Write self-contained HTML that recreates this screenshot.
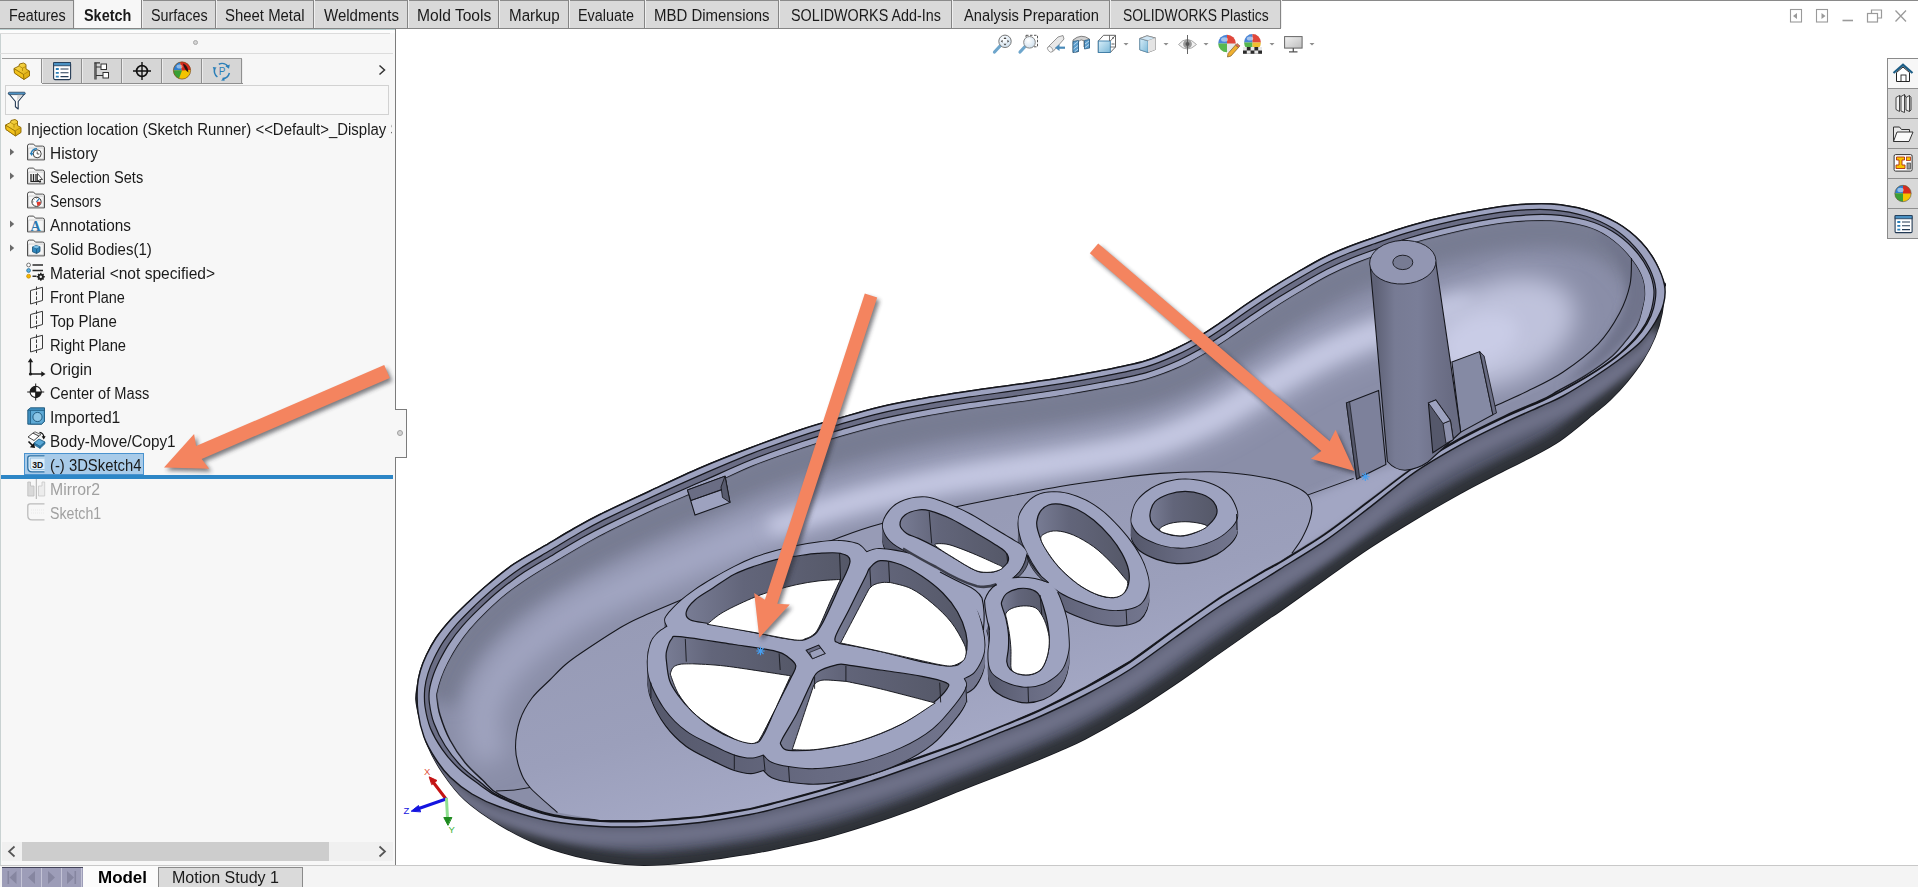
<!DOCTYPE html>
<html><head><meta charset="utf-8"><title>SOLIDWORKS - Injection location (Sketch Runner)</title>
<style>
html,body{margin:0;padding:0;background:#fff;}
body{width:1918px;height:887px;overflow:hidden;font-family:"Liberation Sans",sans-serif;}
#app{position:relative;width:1918px;height:887px;overflow:hidden;background:#fff;}
.t{position:absolute;white-space:nowrap;transform-origin:0 50%;line-height:20px;display:inline-block;}
.a{position:absolute;}
</style></head><body><div id="app">

<!-- left panel -->
<div class="a" style="left:0;top:30px;width:395px;height:836px;background:#f7f7f7"></div>
<div class="a" style="left:0;top:30px;width:1px;height:857px;background:#c9d2d2"></div>
<!-- top tab strip -->
<div class="a" style="left:0;top:0;width:1918px;height:1px;background:#8a8a8a"></div>
<div class="a" style="left:0;top:1px;width:1280px;height:27px;background:#d9d9d9"></div>
<div class="a" style="left:74px;top:0;width:67px;height:28px;background:#f7f7f7"></div>
<div class="a" style="left:0;top:28px;width:1281px;height:1px;background:#858585"></div>
<div class="a" style="left:0;top:29px;width:396px;height:1px;background:#b9cfd0"></div>
<div class="a" style="left:0;top:30px;width:395px;height:3px;background:#fcfcfc"></div>
<div class="a" style="left:0;top:33px;width:390px;height:1px;background:#dcdcdc"></div>
<div class="a" style="left:0;top:53px;width:393px;height:1px;background:#dcdcdc"></div>
<!-- tab separators -->
<div class="a sep" style="left:73px"></div><div class="a sep" style="left:141px"></div><div class="a sep" style="left:215px"></div>
<div class="a sep" style="left:313px"></div><div class="a sep" style="left:407px"></div><div class="a sep" style="left:498px"></div>
<div class="a sep" style="left:568px"></div><div class="a sep" style="left:644px"></div><div class="a sep" style="left:778px"></div>
<div class="a sep" style="left:951px"></div><div class="a sep" style="left:1109px"></div><div class="a sep" style="left:1280px"></div>
<style>.sep{top:0;width:1px;height:28px;background:#858585;box-shadow:1px 0 0 #efefef}</style>
<!-- small grip circle -->
<div class="a" style="left:193px;top:40px;width:5px;height:5px;border-radius:50%;background:#d4d4d4;border:1px solid #a8a8a8;box-sizing:border-box"></div>
<!-- icon tab strip -->
<div class="a" style="left:2px;top:58px;width:240px;height:1px;background:#9a9a9a"></div>
<div class="a" style="left:42px;top:59px;width:200px;height:24px;background:#d6d6d6"></div>
<div class="a" style="left:42px;top:83px;width:201px;height:1px;background:#8f8f8f"></div>
<div class="a isep" style="left:41px"></div><div class="a isep" style="left:81px"></div><div class="a isep" style="left:121px"></div>
<div class="a isep" style="left:161px"></div><div class="a isep" style="left:201px"></div><div class="a isep" style="left:241px"></div>
<style>.isep{top:59px;width:1px;height:24px;background:#8f8f8f;box-shadow:1px 0 0 #ececec}</style>
<!-- filter box -->
<div class="a" style="left:5px;top:85px;width:384px;height:30px;border:1px solid #d2d2d2;box-sizing:border-box;background:#f8f8f8"></div>
<!-- selection + rollback bar -->
<div class="a" style="left:24px;top:453px;width:120px;height:22px;background:#a8cbe9;border:1px solid #4a93cf;box-sizing:border-box"></div>
<div class="a" style="left:1px;top:475px;width:392px;height:4px;background:#2d86c6"></div>
<!-- panel right border + splitter handle -->
<div class="a" style="left:395px;top:29px;width:1px;height:837px;background:#7c7c7c"></div>
<div class="a" style="left:396px;top:409px;width:11px;height:49px;background:#f7f7f7;border:1px solid #7c7c7c;border-left:none;box-sizing:border-box"></div>
<div class="a" style="left:395px;top:410px;width:1px;height:47px;background:#f7f7f7"></div>
<div class="a" style="left:397px;top:430px;width:6px;height:6px;border-radius:50%;background:#d4d4d4;border:1px solid #a0a0a0;box-sizing:border-box"></div>
<!-- horizontal scrollbar -->
<div class="a" style="left:2px;top:842px;width:391px;height:19px;background:#f0f0f0"></div>
<div class="a" style="left:22px;top:842px;width:307px;height:19px;background:#cdcdcd"></div>
<!-- bottom strip -->
<div class="a" style="left:0;top:865px;width:1918px;height:1px;background:#c8c8c8"></div>
<div class="a" style="left:0;top:866px;width:1918px;height:21px;background:#f4f4f4"></div>
<div class="a" style="left:2px;top:867px;width:81px;height:20px;background:#9d9db8;border-top:1px solid #44445a;box-sizing:border-box"></div>
<div class="a" style="left:21px;top:868px;width:1px;height:19px;background:#c4c4d6"></div>
<div class="a" style="left:41px;top:868px;width:1px;height:19px;background:#c4c4d6"></div>
<div class="a" style="left:61px;top:868px;width:1px;height:19px;background:#c4c4d6"></div>
<div class="a" style="left:81px;top:868px;width:1px;height:19px;background:#c4c4d6"></div>
<div class="a" style="left:83px;top:866px;width:75px;height:21px;background:#fbfbfb"></div>
<div class="a" style="left:158px;top:867px;width:145px;height:20px;background:#dadada;border:1px solid #8a8a8a;border-bottom:none;box-sizing:border-box"></div>
<!-- right task pane -->
<div class="a" style="left:1887px;top:58px;width:31px;height:181px;background:#d8d8d8;border:1px solid #8a8a8a;border-right:none;box-sizing:border-box"></div>
<div class="a" style="left:1888px;top:59px;width:30px;height:29px;background:#f7f7f7"></div>
<div class="a" style="left:1888px;top:88px;width:30px;height:1px;background:#8f8f8f"></div>
<div class="a" style="left:1888px;top:118px;width:30px;height:1px;background:#8f8f8f"></div>
<div class="a" style="left:1888px;top:148px;width:30px;height:1px;background:#8f8f8f"></div>
<div class="a" style="left:1888px;top:178px;width:30px;height:1px;background:#8f8f8f"></div>
<div class="a" style="left:1888px;top:208px;width:30px;height:1px;background:#8f8f8f"></div>

<span class="t " style="left:9.2px;top:6.0px;font-size:16px;color:#1a1a1a;transform:scaleX(0.8965);">Features</span>
<span class="t " style="left:84.2px;top:6.0px;font-size:16px;color:#1a1a1a;transform:scaleX(0.9016);font-weight:bold;">Sketch</span>
<span class="t " style="left:150.9px;top:6.0px;font-size:16px;color:#1a1a1a;transform:scaleX(0.8965);">Surfaces</span>
<span class="t " style="left:225.2px;top:6.0px;font-size:16px;color:#1a1a1a;transform:scaleX(0.9323);">Sheet Metal</span>
<span class="t " style="left:324.2px;top:6.0px;font-size:16px;color:#1a1a1a;transform:scaleX(0.9394);">Weldments</span>
<span class="t " style="left:416.5px;top:6.0px;font-size:16px;color:#1a1a1a;transform:scaleX(0.9753);">Mold Tools</span>
<span class="t " style="left:509.2px;top:6.0px;font-size:16px;color:#1a1a1a;transform:scaleX(0.9485);">Markup</span>
<span class="t " style="left:578.2px;top:6.0px;font-size:16px;color:#1a1a1a;transform:scaleX(0.8978);">Evaluate</span>
<span class="t " style="left:654.2px;top:6.0px;font-size:16px;color:#1a1a1a;transform:scaleX(0.9354);">MBD Dimensions</span>
<span class="t " style="left:790.9px;top:6.0px;font-size:16px;color:#1a1a1a;transform:scaleX(0.8967);">SOLIDWORKS Add-Ins</span>
<span class="t " style="left:964.2px;top:6.0px;font-size:16px;color:#1a1a1a;transform:scaleX(0.9193);">Analysis Preparation</span>
<span class="t " style="left:1122.5px;top:6.0px;font-size:16px;color:#1a1a1a;transform:scaleX(0.8665);">SOLIDWORKS Plastics</span>
<span class="t " style="left:49.6px;top:144.0px;font-size:16px;color:#1a1a1a;transform:scaleX(0.9642);">History</span>
<span class="t " style="left:49.6px;top:168.0px;font-size:16px;color:#1a1a1a;transform:scaleX(0.9112);">Selection Sets</span>
<span class="t " style="left:49.6px;top:192.0px;font-size:16px;color:#1a1a1a;transform:scaleX(0.8723);">Sensors</span>
<span class="t " style="left:49.6px;top:216.0px;font-size:16px;color:#1a1a1a;transform:scaleX(0.9586);">Annotations</span>
<span class="t " style="left:49.6px;top:240.0px;font-size:16px;color:#1a1a1a;transform:scaleX(0.9383);">Solid Bodies(1)</span>
<span class="t " style="left:49.6px;top:264.0px;font-size:16px;color:#1a1a1a;transform:scaleX(0.9719);">Material &lt;not specified&gt;</span>
<span class="t " style="left:49.6px;top:288.0px;font-size:16px;color:#1a1a1a;transform:scaleX(0.9044);">Front Plane</span>
<span class="t " style="left:49.6px;top:312.0px;font-size:16px;color:#1a1a1a;transform:scaleX(0.9387);">Top Plane</span>
<span class="t " style="left:49.6px;top:336.0px;font-size:16px;color:#1a1a1a;transform:scaleX(0.9188);">Right Plane</span>
<span class="t " style="left:49.6px;top:360.0px;font-size:16px;color:#1a1a1a;transform:scaleX(0.9841);">Origin</span>
<span class="t " style="left:49.6px;top:384.0px;font-size:16px;color:#1a1a1a;transform:scaleX(0.9154);">Center of Mass</span>
<span class="t " style="left:49.6px;top:408.0px;font-size:16px;color:#1a1a1a;transform:scaleX(0.9759);">Imported1</span>
<span class="t " style="left:49.6px;top:432.0px;font-size:16px;color:#1a1a1a;transform:scaleX(0.9543);">Body-Move/Copy1</span>
<span class="t " style="left:49.6px;top:456.0px;font-size:16px;color:#1a1a1a;transform:scaleX(0.9261);">(-) 3DSketch4</span>
<span class="t " style="left:49.6px;top:480.0px;font-size:16px;color:#a0a0a0;transform:scaleX(0.9870);">Mirror2</span>
<span class="t " style="left:49.6px;top:504.0px;font-size:16px;color:#a0a0a0;transform:scaleX(0.8857);">Sketch1</span>
<div style="position:absolute;left:26.8px;top:120px;width:365.2px;height:22px;overflow:hidden"><span class="t" style="left:0;top:0;font-size:16px;color:#1a1a1a;transform:scaleX(0.9339)">Injection location (Sketch Runner) &lt;&lt;Default&gt;_Display State 1&gt;</span></div>
<span class="t " style="left:98.0px;top:868.0px;font-size:16px;color:#000;transform:scaleX(1.0603);font-weight:bold;">Model</span>
<span class="t " style="left:172.0px;top:868.0px;font-size:16px;color:#1a1a1a;transform:scaleX(1.0026);">Motion Study 1</span>
<svg class="a" style="left:0;top:0" width="1918" height="887" viewBox="0 0 1918 887">
<defs>
<linearGradient id="fg" x1="0" y1="0" x2="0" y2="1"><stop offset="0" stop-color="#fbfbfb"/><stop offset="1" stop-color="#cfcfcf"/></linearGradient>
<linearGradient id="yb" x1="0" y1="0" x2="1" y2="1"><stop offset="0" stop-color="#ffe45c"/><stop offset="1" stop-color="#d9a300"/></linearGradient>
<linearGradient id="bl" x1="0" y1="0" x2="1" y2="1"><stop offset="0" stop-color="#8fc7e8"/><stop offset="1" stop-color="#2f7fb0"/></linearGradient>
<linearGradient id="lb" x1="0" y1="0" x2="1" y2="1"><stop offset="0" stop-color="#d8eef9"/><stop offset="1" stop-color="#7db9d8"/></linearGradient>
<linearGradient id="mon" x1="0" y1="0" x2="1" y2="1"><stop offset="0" stop-color="#f2f2f2"/><stop offset="1" stop-color="#bdbdbd"/></linearGradient>
<radialGradient id="glass" cx="0.4" cy="0.35" r="0.7"><stop offset="0" stop-color="#ffffff"/><stop offset="1" stop-color="#cfe0ee"/></radialGradient>
<g id="folder"><path d="M0.5,2.5 Q0.5,0.6 2.4,0.6 L6.6,0.6 L8.4,2.6 L15.6,2.6 Q17.5,2.6 17.5,4.5 L17.5,16.4 L0.5,16.4Z" fill="url(#fg)" stroke="#4f4f4f" stroke-width="1"/><path d="M1.6,4.6 L16.4,4.6 L16.4,15.4 L1.6,15.4Z" fill="#f6f6f6" stroke="#bdbdbd" stroke-width="0.6"/></g>
<g id="part"><path d="M1,6 L6,3.5 L6.5,1.5 L10.5,0.5 L13,2 L13,6.5 L16.5,8.5 L16.5,13.5 L11,17 L1.5,10.5Z" fill="url(#yb)" stroke="#8a6400" stroke-width="0.9" stroke-linejoin="round"/><path d="M1.2,6.2 L10.5,12 L16.3,8.6 M10.5,12 L10.8,16.8 M6.2,3.6 L9.5,5.6 L13,4 M9.5,5.6 L9.5,8.5" fill="none" stroke="#a87c00" stroke-width="0.7"/><path d="M1.2,6.2 L10.5,12 L10.8,16.8 L1.5,10.5Z" fill="#f2c21c"/><path d="M1.2,6.2 L10.5,12 L10.8,16.8 L1.5,10.5Z" fill="none" stroke="#8a6400" stroke-width="0.7"/></g>
<g id="plane"><path d="M2.5,4 L14.5,0.8 L14.5,14 L2.5,17.5Z" fill="none" stroke="#3a3a3a" stroke-width="1"/><path d="M8.5,0 L8.5,19" stroke="#3a3a3a" stroke-width="1" stroke-dasharray="3.5,1.5"/></g>
<path id="tri" d="M0,-3.6 L4.2,0 L0,3.6Z" fill="#6a6a6a"/>
<path id="dd" d="M0,0 L5,0 L2.5,2.6Z" fill="#8c8c8c"/>
</defs>
<use href="#part" x="4.5" y="119"/>
<use href="#folder" x="27" y="143.5"/>
<use href="#folder" x="27" y="167.5"/>
<use href="#folder" x="27" y="191.5"/>
<use href="#folder" x="27" y="215.5"/>
<use href="#folder" x="27" y="239.5"/>
<use href="#tri" x="10" y="152"/>
<use href="#tri" x="10" y="176"/>
<use href="#tri" x="10" y="224"/>
<use href="#tri" x="10" y="248"/>
<g transform="translate(27,143.5)"><circle cx="10.2" cy="10.3" r="4" fill="#fff" stroke="#2c2c2c" stroke-width="0.9"/><path d="M10.2,8 L10.2,10.5 L12.3,10.5" fill="none" stroke="#2c2c2c" stroke-width="0.8"/><path d="M4.2,9.5 A6,6 0 0 1 10,5.2" fill="none" stroke="#2b7fb8" stroke-width="1.6"/><path d="M2.6,9.6 L6.6,9.6 L4.6,12.6Z" fill="#2b7fb8"/></g>
<g transform="translate(27,167.5)"><path d="M4,6.5 L4,14 M6.5,6.5 L6.5,14 M9,6.5 L9,14" stroke="#222" stroke-width="1.3"/><path d="M10.5,6 L15.5,12 L12.8,12 L13.8,14.5 L12.5,14.8 L11.5,12.5 L10.5,13.8Z" fill="#fff" stroke="#222" stroke-width="0.8"/><path d="M3.5,14 L14,14" stroke="#222" stroke-width="1"/></g>
<g transform="translate(27,191.5)"><circle cx="9.5" cy="10.3" r="4.6" fill="#fff" stroke="#333" stroke-width="1"/><path d="M9.5,10.3 L13.8,10.3 A4.3,4.3 0 0 1 10.5,14.5Z" fill="#e23a2e"/><path d="M9.5,10.3 L12.3,7" stroke="#2b7fb8" stroke-width="1.2"/><path d="M9.5,6 L9.5,7 M5.5,10.3 L6.5,10.3 M6.6,7.4 L7.3,8.1" stroke="#333" stroke-width="0.7"/></g>
<text x="30.4" y="230.5" font-family="Liberation Serif, serif" font-weight="bold" font-size="14" fill="#2a78b0">A</text>
<g transform="translate(27,239.5)"><path d="M5.5,7.5 L9,6 L13,7.2 L13,12 L9.6,14 L5.5,12.3Z" fill="#2f86bd" stroke="#174f73" stroke-width="0.8"/><path d="M5.5,7.5 L9.6,9 L13,7.2 M9.6,9 L9.6,14" fill="none" stroke="#174f73" stroke-width="0.7"/><path d="M5.5,7.5 L9,6 L13,7.2 L9.6,9Z" fill="#7cc0e6"/></g>
<g transform="translate(26,263)"><path d="M6.5,2 L17,2 M6.5,7.5 L17,7.5 M6.5,13.2 L10.5,13.2" stroke="#2a2a2a" stroke-width="1.6"/><circle cx="2.6" cy="2" r="1.9" fill="#fff" stroke="#555" stroke-width="0.8"/><circle cx="2.6" cy="7.5" r="1.9" fill="#59b0e0" stroke="#2a6d96" stroke-width="0.8"/><circle cx="2.6" cy="13.2" r="2" fill="#f7b500" stroke="#b98500" stroke-width="0.6"/><circle cx="14.8" cy="13.8" r="3.1" fill="#222"/><circle cx="14.8" cy="13.8" r="1.1" fill="#f4f4f4"/><path d="M14.8,9.8 L14.8,17.8 M10.8,13.8 L18.8,13.8 M12,11 L17.6,16.6 M17.6,11 L12,16.6" stroke="#222" stroke-width="1.4"/><circle cx="14.8" cy="13.8" r="1.2" fill="#f4f4f4"/></g>
<use href="#plane" x="28" y="286.5"/>
<use href="#plane" x="28" y="310.5"/>
<use href="#plane" x="28" y="334.5"/>
<g transform="translate(27,358)"><path d="M3.5,3 L3.5,16 L16,16" fill="none" stroke="#1c1c1c" stroke-width="1.5"/><path d="M3.5,0 L6.2,4.2 L0.8,4.2Z M18.5,16 L14.3,13.3 L14.3,18.7Z" fill="#1c1c1c"/><circle cx="3.5" cy="16" r="1.6" fill="#1c1c1c"/></g>
<g transform="translate(27,383)"><circle cx="8.7" cy="9" r="5.6" fill="#fff" stroke="#1c1c1c" stroke-width="1.1"/><path d="M8.7,9 L8.7,3.4 A5.6,5.6 0 0 0 3.1,9Z M8.7,9 L8.7,14.6 A5.6,5.6 0 0 0 14.3,9Z" fill="#1c1c1c"/><path d="M8.7,0.5 L8.7,17.5 M0.2,9 L17.2,9" stroke="#1c1c1c" stroke-width="1"/></g>
<g transform="translate(27,407)"><path d="M0.8,3 L3.5,0.8 L17.5,0.8 L17.5,14.5 L14.5,17.2 L0.8,17.2Z" fill="#3f8fc0" stroke="#1a5478" stroke-width="0.9"/><path d="M3.5,3.4 L17.3,3.4 L17.3,14.5 L14.5,17 L3.5,17Z" fill="#5eaad6" stroke="#1a5478" stroke-width="0.7"/><circle cx="10.5" cy="10" r="4.6" fill="#8cc6e6" stroke="#1a5478" stroke-width="0.9"/><path d="M0.8,3 L3.5,3.4" stroke="#1a5478" stroke-width="0.7"/></g>
<g transform="translate(27,431)"><path d="M1,6 L6,2 L12,5 L7,9.5Z" fill="#fff" stroke="#333" stroke-width="0.9"/><path d="M6,2 L8,0.8 L14,3.6 L12,5Z" fill="#eee" stroke="#333" stroke-width="0.7"/><path d="M7,12 L12,8 L18,11 L13,15.5Z" fill="#59a9d8" stroke="#1d5e86" stroke-width="0.9"/><path d="M7,12 L7,13.8 L13,17.4 L13,15.5Z M13,15.5 L18,11 L18,12.8 L13,17.4Z" fill="#2f7fb0" stroke="#1d5e86" stroke-width="0.6"/><path d="M1.5,10.5 L6.5,15.5" stroke="#111" stroke-width="1.6"/><path d="M8,17 L2.8,16.2 L7,12Z" fill="#111"/><path d="M12.5,1.5 A4.5,4.5 0 0 1 16.8,6" fill="none" stroke="#111" stroke-width="1.3"/><path d="M16.8,8.5 L14.6,5.2 L18.6,5.2Z" fill="#111"/></g>
<g transform="translate(27,455)"><path d="M17.5,0.8 L3,0.8 Q0.8,0.8 0.8,3 L0.8,12.5 Q0.8,16.8 5,16.8 L17.5,16.8" fill="#dfeefa" stroke="#2a6fa4" stroke-width="1.3"/><path d="M3.2,3 L17.5,3 M3.2,3 L3.2,12 Q3.2,14.6 6,14.6 L17.5,14.6" fill="none" stroke="#7eb3d9" stroke-width="0.8"/><text x="5.2" y="12.6" font-family="Liberation Sans, sans-serif" font-weight="bold" font-size="8.6" fill="#111">3D</text></g>
<g transform="translate(27,479)"><path d="M0.8,17 L0.8,3 L3.5,3 L3.5,7 L7,7 L7,17Z" fill="#d9d9d9" stroke="#bdbdbd" stroke-width="0.8"/><path d="M11.5,17 L11.5,7 L15,7 L15,3 L17.7,3 L17.7,17Z" fill="#ececec" stroke="#c8c8c8" stroke-width="0.8"/><path d="M9.3,0 L9.3,20" stroke="#a8a8a8" stroke-width="0.9"/></g>
<g transform="translate(27,503)"><path d="M17.5,0.8 L3,0.8 Q0.8,0.8 0.8,3 L0.8,12.5 Q0.8,16.8 5,16.8 L17.5,16.8" fill="none" stroke="#bcbcbc" stroke-width="1.3"/><path d="M4,7 L17,7 M4,10 L17,10" stroke="#e6e6e6" stroke-width="0.8" stroke-dasharray="1,1"/></g>
<g transform="translate(13,62.5) scale(1.0)"><use href="#part"/></g>
<g transform="translate(53,62)"><rect x="0.6" y="0.6" width="17" height="17" rx="1.5" fill="#fff" stroke="#243b55" stroke-width="1.1"/><rect x="0.6" y="0.6" width="17" height="3.2" fill="#4a90c2" stroke="#243b55" stroke-width="0.8"/><path d="M2.8,7 L5.8,7 M2.8,10.8 L5.8,10.8 M2.8,14.6 L5.8,14.6" stroke="#2b7fb8" stroke-width="1.8"/><path d="M7.5,7 L15.5,7 M7.5,10.8 L15.5,10.8 M7.5,14.6 L15.5,14.6" stroke="#243b55" stroke-width="1.1"/></g>
<g transform="translate(94,62)"><path d="M2,0.5 L2,17.5 M0.5,0.8 L6,0.8 M2,5 L7,5 M2,13.5 L9,13.5" fill="none" stroke="#333" stroke-width="1.2"/><path d="M0.8,0.5 L0.8,17.5" stroke="#333" stroke-width="0.9"/><rect x="7" y="2" width="5.5" height="5.5" fill="#fff" stroke="#333" stroke-width="1"/><rect x="9" y="10.5" width="5.5" height="5.5" fill="#fff" stroke="#333" stroke-width="1"/></g>
<g transform="translate(142,71)"><circle r="5.4" fill="none" stroke="#111" stroke-width="1.7"/><path d="M-9,0 L9,0 M0,-9 L0,9" stroke="#111" stroke-width="1.4"/></g>
<g transform="translate(182,70.5)"><circle r="8.6" fill="#f4c400"/><path d="M0,0 L-8.6,0 A8.6,8.6 0 0 1 -2,-8.4Z" fill="#2f7fd0"/><path d="M0,0 L-2,-8.4 A8.6,8.6 0 0 1 8.6,-0.5Z" fill="#d92b1e"/><path d="M0,0 L-8.6,0 A8.6,8.6 0 0 0 -3,8Z" fill="#3aa035"/><path d="M1,-7 Q6,-5 6.5,2 Q2,-1 1,-7Z" fill="#2a1410"/><circle r="8.6" fill="none" stroke="#7a4a20" stroke-width="0.7"/><ellipse cx="-2.5" cy="-4" rx="3" ry="2" fill="#fff" opacity="0.45"/></g>
<g transform="translate(222,71)"><path d="M-3.2,-6.8 A7.6,7.6 0 0 1 6.2,-4.2 M7.4,2 A7.6,7.6 0 0 1 0.5,7.6 M-4.6,6 A7.6,7.6 0 0 1 -7.2,-2.4" fill="none" stroke="#2b7fb8" stroke-width="1.5"/><path d="M7.8,-6.5 L7,-2.2 L3.4,-4.8Z M-1,9.6 L2.4,6.2 L2.6,9.8Z M-9.2,-4 L-5.4,-3.4 L-8,-0.4Z" fill="#2b7fb8"/><text x="-3.2" y="3.6" font-family="Liberation Sans, sans-serif" font-size="10" fill="#2b7fb8">P</text></g>
<path d="M379.5,65.5 L384.5,70 L379.5,74.5" fill="none" stroke="#333" stroke-width="1.5"/>
<g transform="translate(8,92)"><path d="M0.7,1.5 L16.8,1.5 L10.2,9.5 L10.2,17 L7.4,14.8 L7.4,9.5Z" fill="#fdfdfd" stroke="#243b55" stroke-width="1.1" stroke-linejoin="round"/><rect x="0.3" y="0.2" width="16.9" height="2.4" rx="1" fill="#4a90c2" stroke="#243b55" stroke-width="0.7"/><path d="M8.8,9 L14.5,2.8 L9.5,2.8Z" fill="#c8c8c8" opacity="0.7"/></g>
<path d="M14.5,846.5 L9,851.5 L14.5,856.5" fill="none" stroke="#555" stroke-width="1.7"/>
<path d="M379.5,846.5 L385,851.5 L379.5,856.5" fill="none" stroke="#555" stroke-width="1.7"/>
<g fill="#8686a0"><path d="M16.5,871 L9.5,877.5 L16.5,884Z"/><rect x="7.5" y="871" width="1.6" height="13"/><path d="M35,871 L28,877.5 L35,884Z"/><path d="M48,871 L55,877.5 L48,884Z"/><path d="M67,871 L74,877.5 L67,884Z"/><rect x="74.5" y="871" width="1.6" height="13"/></g>
<g fill="none" stroke="#9a9a9a" stroke-width="1.1"><rect x="1790.5" y="9.5" width="11" height="12.5"/><rect x="1816.5" y="9.5" width="11" height="12.5"/></g>
<path d="M1797,13 L1793,16 L1797,19Z M1821.5,13 L1825.5,16 L1821.5,19Z" fill="#9a9a9a"/>
<path d="M1842.5,20.5 L1853,20.5" stroke="#9a9a9a" stroke-width="1.6"/>
<g fill="none" stroke="#9a9a9a" stroke-width="1.2"><path d="M1871.5,13.5 L1871.5,10 L1881.5,10 L1881.5,18 L1877.5,18"/><rect x="1867.5" y="13.5" width="10" height="8.5"/></g>
<path d="M1895.5,10.5 L1906,21.5 M1906,10.5 L1895.5,21.5" stroke="#9a9a9a" stroke-width="1.3"/>
<g transform="translate(1893,64)"><path d="M0.5,9 L10,0.8 L19.5,9" fill="none" stroke="#1d5e86" stroke-width="2.2"/><path d="M3.5,8.5 L3.5,17.5 L16.5,17.5 L16.5,8.5 L10,3Z" fill="#fff" stroke="#222" stroke-width="1"/><rect x="8" y="11" width="5" height="6.5" fill="#fff" stroke="#222" stroke-width="0.9"/></g>
<g transform="translate(1894,93.5)"><path d="M2,4 L5.5,2 L5.5,18 L2,16Z M7,3 L10.5,1 L10.5,19 L7,17.5Z M12,4 L15.5,2 L15.5,18 L12,16.5Z" fill="#f2f2f2" stroke="#333" stroke-width="0.9"/><path d="M5.5,2 L7,3 M10.5,1 L12,4 M15.5,2 L17,4 L17,16.5 L15.5,18" fill="none" stroke="#333" stroke-width="0.9"/></g>
<g transform="translate(1892.5,125)"><path d="M1,16.5 L1,2 L7,2 L9,4.5 L17,4.5 L17,7" fill="#e9e9e9" stroke="#333" stroke-width="1"/><path d="M1,16.5 L4.5,7 L20.5,7 L16.5,16.5Z" fill="#fafafa" stroke="#333" stroke-width="1"/></g>
<g transform="translate(1893.5,154)"><rect x="0.6" y="0.6" width="18" height="16.5" rx="1.5" fill="#fff" stroke="#333" stroke-width="1"/><path d="M3,3 L11,3 L11,6 L8.5,6 L8.5,11 L11.5,11 L11.5,14.5 L2.5,14.5 L2.5,11 L5.5,11 L5.5,6 L3,6Z" fill="#f7c400" stroke="#b03010" stroke-width="0.9"/><rect x="13" y="3" width="4" height="3.5" fill="#f7c400" stroke="#b03010" stroke-width="0.8"/><rect x="13.5" y="9" width="3.5" height="6" fill="#9a9a9a" stroke="#444" stroke-width="0.7"/></g>
<g transform="translate(1903,193.5)"><circle r="8.2" fill="#f4c400"/><path d="M0,0 L-8.2,0 A8.2,8.2 0 0 1 0,-8.2Z" fill="#2f7fd0"/><path d="M0,0 L0,-8.2 A8.2,8.2 0 0 1 8.2,0Z" fill="#d92b1e"/><path d="M0,0 L-8.2,0 A8.2,8.2 0 0 0 0,8.2Z" fill="#3aa035"/><circle r="8.2" fill="none" stroke="#555" stroke-width="0.6"/><ellipse cx="-2.5" cy="-3.5" rx="3.2" ry="2.2" fill="#fff" opacity="0.5"/></g>
<g transform="translate(1894.5,215)"><rect x="0.6" y="0.6" width="17" height="17" rx="1.2" fill="#fff" stroke="#243b55" stroke-width="1.1"/><rect x="0.6" y="0.6" width="17" height="3.2" fill="#4a90c2" stroke="#243b55" stroke-width="0.8"/><path d="M2.8,7 L5.8,7 M2.8,10.8 L5.8,10.8 M2.8,14.6 L5.8,14.6" stroke="#2b7fb8" stroke-width="1.8"/><path d="M7.5,7 L15.5,7 M7.5,10.8 L15.5,10.8 M7.5,14.6 L15.5,14.6" stroke="#243b55" stroke-width="1.1"/></g>
<g transform="translate(993.5,34.5)"><path d="M1,17.5 L7.5,10.5" stroke="#6ea6cc" stroke-width="3.2" stroke-linecap="round"/><circle cx="11.5" cy="6.8" r="6.2" fill="url(#glass)" stroke="#777" stroke-width="1"/><path d="M11.5,2.6 L13,4.4 L10,4.4Z M11.5,11 L13,9.2 L10,9.2Z M7.3,6.8 L9.1,5.3 L9.1,8.3Z M15.7,6.8 L13.9,5.3 L13.9,8.3Z" fill="#444"/></g>
<g transform="translate(1019,34.5)"><rect x="7" y="0.8" width="11.5" height="11.5" fill="none" stroke="#444" stroke-width="0.9" stroke-dasharray="2.5,1.5"/><path d="M1,17.5 L7,11" stroke="#6ea6cc" stroke-width="3.2" stroke-linecap="round"/><circle cx="10.5" cy="7.8" r="5.8" fill="url(#glass)" stroke="#888" stroke-width="1"/></g>
<g transform="translate(1046,34.5)"><path d="M1.5,13 L12,2.5 L17,1 L18,4.5 L7,17 Q3,18 1.5,13Z" fill="#e8e8e8" stroke="#888" stroke-width="0.9"/><ellipse cx="4.2" cy="14.8" rx="2.2" ry="3.2" transform="rotate(-40 4.2 14.8)" fill="#fafafa" stroke="#888" stroke-width="0.7"/><path d="M19,13.2 L12.5,13.2" stroke="#4a8ab8" stroke-width="2.2"/><path d="M9,13.2 L13.5,9.8 L13.5,16.6Z" fill="#4a8ab8"/></g>
<g transform="translate(1072,35)"><path d="M1,5 Q9,-2 17.5,4 L17.5,13 Q13,9.5 12,12 L12,5.8 Q9,3.5 6.5,6.5 L6.5,16.5 L1,17.5Z" fill="#d0d0d0" stroke="#666" stroke-width="0.8"/><path d="M1,6.5 L6.5,5.5 L6.5,16.5 L1,17.5Z M12.5,5.5 L17.5,4.5 L17.5,13 L12.5,14Z" fill="#5a9ccc" stroke="#2c5f86" stroke-width="0.8"/><path d="M1.5,10 L6,6.5 M1.5,14 L6,10.5 M2.5,17 L6,14 M13,9 L17,6 M13,12.5 L17,9.5" stroke="#cfe6f5" stroke-width="0.8"/></g>
<g transform="translate(1097.5,34.5)"><path d="M0.8,6.5 L6,0.8 L18,0.8 L18,12.5 L12.8,18 L0.8,18Z" fill="#fff" stroke="#555" stroke-width="0.9"/><rect x="0.8" y="6.5" width="12" height="11.5" fill="url(#lb)" stroke="#3d7da8" stroke-width="0.9"/><path d="M12.8,6.5 L18,0.8 M12,0.8 L12,6.5 M12.8,12.5 L18,12.5" stroke="#555" stroke-width="0.8"/><path d="M14,9.5 L17,9.5 M14.5,3.5 L16.5,3.5" stroke="#333" stroke-width="0.8"/></g>
<use href="#dd" x="1123.5" y="43"/>
<g transform="translate(1139,35)"><path d="M0.8,3.5 L8,0.8 L16.5,3 L16.5,14.5 L9,17.5 L0.8,14.8Z" fill="#fff" stroke="#777" stroke-width="0.9"/><path d="M0.8,3.5 L9,5.8 L9,17.5 L0.8,14.8Z" fill="url(#lb)" stroke="#4a86ad" stroke-width="0.7"/><path d="M0.8,3.5 L8,0.8 L16.5,3 L9,5.8Z" fill="#cfe6f5" stroke="#777" stroke-width="0.6"/><path d="M9,5.8 L16.5,3 L16.5,14.5 L9,17.5Z" fill="#e4e4e4"/></g>
<use href="#dd" x="1163.5" y="43"/>
<g transform="translate(1178,36)"><path d="M0.5,8.5 Q9,-1.5 18.5,8.5 Q9,17.5 0.5,8.5Z" fill="#f2f2f2" stroke="#aaa" stroke-width="1"/><circle cx="9.5" cy="8" r="4.4" fill="#9a9a9a"/><circle cx="9.5" cy="8" r="2" fill="#555"/><path d="M9.5,-1 L9.5,18" stroke="#555" stroke-width="0.9"/></g>
<use href="#dd" x="1203.5" y="43"/>
<g transform="translate(1227,43.5)"><circle r="8.8" fill="#e8e8e8"/><path d="M0,0 L-8.8,0 A8.8,8.8 0 0 1 0,-8.8Z" fill="#4a86d8"/><path d="M0,0 L0,-8.8 A8.8,8.8 0 0 1 8.8,0Z" fill="#e0483c"/><path d="M0,0 L-8.8,0 A8.8,8.8 0 0 0 0,8.8Z" fill="#57b84e"/><ellipse cx="-2.5" cy="-4" rx="3.4" ry="2.2" fill="#fff" opacity="0.5"/><path d="M1,10 L8.5,1.5 L11.5,4 L4,12.5 L0.5,13.5Z" fill="#f0b030" stroke="#7a5a20" stroke-width="0.7"/><path d="M8.5,1.5 L10,0 L13,2.4 L11.5,4Z" fill="#e06a5a" stroke="#7a5a20" stroke-width="0.6"/></g>
<g transform="translate(1252.5,42.5)"><circle r="8.4" fill="#e8e8e8"/><path d="M0,0 L-8.4,0 A8.4,8.4 0 0 1 0,-8.4Z" fill="#4a86d8"/><path d="M0,0 L0,-8.4 A8.4,8.4 0 0 1 8.4,0Z" fill="#e0483c"/><path d="M0,0 L-8.4,0 A8.4,8.4 0 0 0 0,8.4Z" fill="#57b84e"/><path d="M0,0 L8.4,0 A8.4,8.4 0 0 1 0,8.4Z" fill="#f0c030"/><ellipse cx="-2.5" cy="-4" rx="3.2" ry="2" fill="#fff" opacity="0.5"/><rect x="-9.5" y="4.5" width="19" height="6.8" fill="#2a2a2a"/><path d="M-9.5,4.5 h3.8 v3.4 h-3.8Z M-1.9,4.5 h3.8 v3.4 h-3.8Z M5.7,4.5 h3.8 v3.4 h-3.8Z M-5.7,7.9 h3.8 v3.4 h-3.8Z M1.9,7.9 h3.8 v3.4 h-3.8Z" fill="#e8e8e8"/></g>
<use href="#dd" x="1269.5" y="43"/>
<g transform="translate(1284,36)"><rect x="0.6" y="0.6" width="17.5" height="11.5" fill="url(#mon)" stroke="#666" stroke-width="1"/><path d="M9.3,12 L9.3,15.5 M5,15.8 L13.5,15.8" stroke="#555" stroke-width="1.3"/></g>
<use href="#dd" x="1309.5" y="43"/>
</svg>
<svg class="a" style="left:0;top:0" width="1918" height="887" viewBox="0 0 1918 887">
<defs>
<linearGradient id="gOuter" gradientUnits="userSpaceOnUse" x1="900" y1="760" x2="925" y2="825"><stop offset="0" stop-color="#6a6d84"/><stop offset="0.35" stop-color="#595c70"/><stop offset="1" stop-color="#35363f"/></linearGradient>
<linearGradient id="gOuter2" gradientUnits="userSpaceOnUse" x1="0" y1="0" x2="1" y2="0" gradientTransform="translate(1400 470) rotate(58) scale(60)"><stop offset="0" stop-color="#6a6d84"/><stop offset="0.4" stop-color="#565a6d"/><stop offset="1" stop-color="#393a45"/></linearGradient>
<filter id="b4" x="-20%" y="-20%" width="140%" height="140%"><feGaussianBlur stdDeviation="4"/></filter>
<filter id="b8" x="-20%" y="-20%" width="140%" height="140%"><feGaussianBlur stdDeviation="8"/></filter>
<filter id="b12" x="-20%" y="-20%" width="140%" height="140%"><feGaussianBlur stdDeviation="12"/></filter>
<filter id="b2" x="-20%" y="-20%" width="140%" height="140%"><feGaussianBlur stdDeviation="2"/></filter>
<filter id="sh" x="-20%" y="-20%" width="150%" height="150%"><feGaussianBlur stdDeviation="2.2"/></filter>
<clipPath id="cB"><path d="M437.5,692.0C438.2,688.8 439.8,682.8 441.5,678.0C443.2,673.2 445.3,668.2 448.0,663.0C450.7,657.8 453.8,652.1 457.5,646.5C461.2,640.9 465.1,635.3 470.0,629.5C474.9,623.7 480.9,617.4 487.0,611.5C493.1,605.6 499.2,599.8 506.5,594.0C513.8,588.2 521.8,582.7 530.5,577.0C539.2,571.3 549.8,565.2 559.0,559.7C568.2,554.2 577.3,548.7 586.0,543.8C594.7,538.9 599.0,536.5 611.0,530.5C623.0,524.5 642.3,515.1 658.0,508.0C673.7,500.9 689.2,495.0 705.0,488.0C720.8,481.0 736.8,472.6 753.0,466.0C769.2,459.4 787.3,453.4 802.0,448.5C816.7,443.6 828.0,440.2 841.0,436.5C854.0,432.8 866.8,429.2 880.0,426.0C893.2,422.8 905.0,420.3 920.0,417.5C935.0,414.7 953.3,411.6 970.0,409.0C986.7,406.4 1005.0,404.2 1020.0,402.0C1035.0,399.8 1046.7,398.2 1060.0,396.0C1073.3,393.8 1085.7,391.8 1100.0,389.0C1114.3,386.2 1132.7,383.2 1146.0,379.5C1159.3,375.8 1169.8,371.5 1180.0,367.0C1190.2,362.5 1198.8,357.2 1207.0,352.5C1215.2,347.8 1220.8,343.9 1229.0,338.5C1237.2,333.1 1247.3,325.8 1256.0,320.0C1264.7,314.2 1272.8,308.7 1281.0,303.5C1289.2,298.3 1297.0,293.7 1305.0,289.0C1313.0,284.3 1321.0,279.6 1329.0,275.5C1337.0,271.4 1345.0,267.8 1353.0,264.5C1361.0,261.2 1367.7,258.8 1377.0,255.5C1386.3,252.2 1398.2,247.8 1409.0,244.5C1419.8,241.2 1430.2,238.4 1442.0,235.5C1453.8,232.6 1467.8,229.2 1480.0,227.0C1492.2,224.8 1503.2,223.0 1515.0,222.0C1526.8,221.0 1539.2,220.2 1551.0,221.0C1562.8,221.8 1576.5,224.0 1586.0,226.7C1595.5,229.4 1601.2,232.4 1608.0,237.0C1614.8,241.6 1621.5,247.7 1627.0,254.0C1632.5,260.3 1638.1,268.3 1641.0,275.0C1643.9,281.7 1644.5,287.7 1644.5,294.0C1644.5,300.3 1642.2,307.8 1641.0,313.0C1639.8,318.2 1639.0,321.1 1637.0,325.0C1635.0,328.9 1633.1,331.6 1629.0,336.7C1624.9,341.8 1619.6,349.4 1612.5,355.7C1605.4,362.0 1595.6,368.7 1586.5,374.6C1577.4,380.5 1565.5,386.8 1558.0,391.0C1550.5,395.2 1550.3,395.9 1541.5,400.0C1532.7,404.1 1518.6,409.4 1505.0,415.8C1491.4,422.2 1475.0,430.0 1460.0,438.3C1445.0,446.6 1430.0,455.2 1415.0,465.4C1400.0,475.5 1385.0,487.9 1370.0,499.2C1355.0,510.5 1340.0,522.7 1325.0,533.0C1310.0,543.3 1290.0,555.2 1280.0,561.2C1270.0,567.2 1275.0,563.4 1265.0,569.3C1255.0,575.2 1235.0,586.6 1220.0,596.4C1205.0,606.2 1190.0,617.2 1175.0,627.9C1160.0,638.6 1145.0,650.8 1130.0,660.6C1115.0,670.4 1100.0,678.4 1085.0,686.5C1070.0,694.6 1053.3,702.9 1040.0,709.1C1026.7,715.4 1018.3,718.5 1005.0,724.0C991.7,729.5 975.0,736.4 960.0,742.0C945.0,747.6 930.0,752.5 915.0,757.8C900.0,763.1 885.0,768.5 870.0,773.6C855.0,778.7 840.0,783.7 825.0,788.2C810.0,792.7 792.5,797.3 780.0,800.6C767.5,803.9 763.3,805.4 750.0,808.0C736.7,810.6 716.7,814.0 700.0,816.0C683.3,818.0 666.7,819.3 650.0,820.0C633.3,820.7 616.7,821.0 600.0,820.0C583.3,819.0 566.7,818.2 550.0,814.0C533.3,809.8 511.2,800.7 500.0,795.0C488.8,789.3 488.3,785.4 482.5,780.0C476.7,774.6 470.4,769.2 465.0,762.5C459.6,755.8 454.2,747.9 450.0,740.0C445.8,732.1 442.2,722.2 440.0,715.0C437.8,707.8 437.4,700.8 437.0,697.0C436.6,693.2 436.8,695.2 437.5,692.0Z"/></clipPath>
<clipPath id="cS"><path d="M417.4,686.2C418.1,681.3 419.0,675.6 420.5,670.4C422.0,665.2 423.9,660.4 426.5,655.0C429.1,649.6 432.1,643.8 436.0,638.0C439.9,632.2 444.7,626.4 450.0,620.5C455.3,614.6 461.5,608.7 468.0,602.5C474.5,596.3 481.3,589.9 489.0,583.5C496.7,577.1 504.7,570.3 514.0,564.0C523.3,557.7 535.0,551.6 545.0,545.7C555.0,539.8 564.8,533.7 574.0,528.5C583.2,523.3 587.3,520.8 600.0,514.5C612.7,508.2 633.3,498.8 650.0,491.0C666.7,483.2 683.3,475.2 700.0,468.0C716.7,460.8 733.3,454.3 750.0,448.0C766.7,441.7 785.0,435.0 800.0,430.0C815.0,425.0 826.7,421.8 840.0,418.0C853.3,414.2 866.7,410.2 880.0,407.0C893.3,403.8 905.0,401.7 920.0,399.0C935.0,396.3 953.3,393.5 970.0,391.0C986.7,388.5 1005.0,386.2 1020.0,384.0C1035.0,381.8 1046.7,380.2 1060.0,378.0C1073.3,375.8 1085.8,373.8 1100.0,371.0C1114.2,368.2 1132.5,364.7 1145.0,361.0C1157.5,357.3 1165.8,353.2 1175.0,349.0C1184.2,344.8 1192.5,340.3 1200.0,336.0C1207.5,331.7 1212.2,328.3 1220.0,323.0C1227.8,317.7 1238.2,310.0 1247.0,304.0C1255.8,298.0 1264.5,292.3 1273.0,287.0C1281.5,281.7 1289.7,276.8 1298.0,272.0C1306.3,267.2 1314.7,262.2 1323.0,258.0C1331.3,253.8 1339.7,250.3 1348.0,247.0C1356.3,243.7 1363.3,241.3 1373.0,238.0C1382.7,234.7 1394.8,230.3 1406.0,227.0C1417.2,223.7 1427.7,220.8 1440.0,218.0C1452.3,215.2 1467.5,212.2 1480.0,210.0C1492.5,207.8 1503.2,206.0 1515.0,205.0C1526.8,204.0 1539.2,203.2 1551.0,204.0C1562.8,204.8 1575.0,206.8 1586.0,210.0C1597.0,213.2 1607.8,217.7 1617.0,223.0C1626.2,228.3 1634.5,235.3 1641.0,242.0C1647.5,248.7 1652.1,255.8 1656.0,263.0C1659.9,270.2 1663.1,281.3 1664.5,285.0C1665.9,288.7 1665.0,280.3 1664.6,285.0C1664.2,289.7 1663.6,304.3 1662.0,313.0C1660.4,321.7 1658.2,329.2 1655.0,337.0C1651.8,344.8 1647.7,352.6 1643.0,360.0C1638.3,367.4 1632.5,375.0 1627.0,381.7C1621.5,388.4 1615.5,394.7 1610.0,400.0C1604.5,405.3 1602.3,406.7 1594.0,413.5C1585.7,420.3 1571.0,433.1 1560.0,440.6C1549.0,448.1 1537.2,453.7 1528.0,458.6C1518.8,463.5 1516.3,464.2 1505.0,470.0C1493.7,475.8 1475.0,485.2 1460.0,493.5C1445.0,501.8 1430.0,510.5 1415.0,519.5C1400.0,528.5 1385.0,537.7 1370.0,547.6C1355.0,557.5 1340.0,568.4 1325.0,579.0C1310.0,589.6 1290.0,604.0 1280.0,611.0C1270.0,618.0 1275.0,614.2 1265.0,621.2C1255.0,628.2 1235.0,642.2 1220.0,652.7C1205.0,663.2 1190.0,674.1 1175.0,684.3C1160.0,694.4 1145.0,704.5 1130.0,713.6C1115.0,722.7 1096.7,732.9 1085.0,739.0C1073.3,745.1 1067.5,747.2 1060.0,750.5C1052.5,753.8 1049.2,755.2 1040.0,759.0C1030.8,762.8 1018.3,767.8 1005.0,773.0C991.7,778.2 975.0,784.6 960.0,790.5C945.0,796.4 930.0,802.9 915.0,808.5C900.0,814.1 885.0,819.4 870.0,824.3C855.0,829.2 840.0,833.8 825.0,837.8C810.0,841.8 792.5,845.3 780.0,848.0C767.5,850.7 765.4,851.3 750.0,853.8C734.6,856.2 706.2,860.6 687.5,862.5C668.8,864.4 654.2,865.6 637.5,865.0C620.8,864.4 603.8,862.1 587.5,858.8C571.2,855.4 554.6,850.6 540.0,845.0C525.4,839.4 512.5,832.5 500.0,825.0C487.5,817.5 474.6,808.8 465.0,800.0C455.4,791.2 448.8,781.7 442.5,772.5C436.2,763.3 431.3,754.1 427.5,745.0C423.7,735.9 421.4,725.5 419.5,718.0C417.6,710.5 416.4,705.3 416.0,700.0C415.6,694.7 416.6,691.1 417.4,686.2Z"/></clipPath>
</defs>
<path d="M417.4,686.2C418.1,681.3 419.0,675.6 420.5,670.4C422.0,665.2 423.9,660.4 426.5,655.0C429.1,649.6 432.1,643.8 436.0,638.0C439.9,632.2 444.7,626.4 450.0,620.5C455.3,614.6 461.5,608.7 468.0,602.5C474.5,596.3 481.3,589.9 489.0,583.5C496.7,577.1 504.7,570.3 514.0,564.0C523.3,557.7 535.0,551.6 545.0,545.7C555.0,539.8 564.8,533.7 574.0,528.5C583.2,523.3 587.3,520.8 600.0,514.5C612.7,508.2 633.3,498.8 650.0,491.0C666.7,483.2 683.3,475.2 700.0,468.0C716.7,460.8 733.3,454.3 750.0,448.0C766.7,441.7 785.0,435.0 800.0,430.0C815.0,425.0 826.7,421.8 840.0,418.0C853.3,414.2 866.7,410.2 880.0,407.0C893.3,403.8 905.0,401.7 920.0,399.0C935.0,396.3 953.3,393.5 970.0,391.0C986.7,388.5 1005.0,386.2 1020.0,384.0C1035.0,381.8 1046.7,380.2 1060.0,378.0C1073.3,375.8 1085.8,373.8 1100.0,371.0C1114.2,368.2 1132.5,364.7 1145.0,361.0C1157.5,357.3 1165.8,353.2 1175.0,349.0C1184.2,344.8 1192.5,340.3 1200.0,336.0C1207.5,331.7 1212.2,328.3 1220.0,323.0C1227.8,317.7 1238.2,310.0 1247.0,304.0C1255.8,298.0 1264.5,292.3 1273.0,287.0C1281.5,281.7 1289.7,276.8 1298.0,272.0C1306.3,267.2 1314.7,262.2 1323.0,258.0C1331.3,253.8 1339.7,250.3 1348.0,247.0C1356.3,243.7 1363.3,241.3 1373.0,238.0C1382.7,234.7 1394.8,230.3 1406.0,227.0C1417.2,223.7 1427.7,220.8 1440.0,218.0C1452.3,215.2 1467.5,212.2 1480.0,210.0C1492.5,207.8 1503.2,206.0 1515.0,205.0C1526.8,204.0 1539.2,203.2 1551.0,204.0C1562.8,204.8 1575.0,206.8 1586.0,210.0C1597.0,213.2 1607.8,217.7 1617.0,223.0C1626.2,228.3 1634.5,235.3 1641.0,242.0C1647.5,248.7 1652.1,255.8 1656.0,263.0C1659.9,270.2 1663.1,281.3 1664.5,285.0C1665.9,288.7 1665.0,280.3 1664.6,285.0C1664.2,289.7 1663.6,304.3 1662.0,313.0C1660.4,321.7 1658.2,329.2 1655.0,337.0C1651.8,344.8 1647.7,352.6 1643.0,360.0C1638.3,367.4 1632.5,375.0 1627.0,381.7C1621.5,388.4 1615.5,394.7 1610.0,400.0C1604.5,405.3 1602.3,406.7 1594.0,413.5C1585.7,420.3 1571.0,433.1 1560.0,440.6C1549.0,448.1 1537.2,453.7 1528.0,458.6C1518.8,463.5 1516.3,464.2 1505.0,470.0C1493.7,475.8 1475.0,485.2 1460.0,493.5C1445.0,501.8 1430.0,510.5 1415.0,519.5C1400.0,528.5 1385.0,537.7 1370.0,547.6C1355.0,557.5 1340.0,568.4 1325.0,579.0C1310.0,589.6 1290.0,604.0 1280.0,611.0C1270.0,618.0 1275.0,614.2 1265.0,621.2C1255.0,628.2 1235.0,642.2 1220.0,652.7C1205.0,663.2 1190.0,674.1 1175.0,684.3C1160.0,694.4 1145.0,704.5 1130.0,713.6C1115.0,722.7 1096.7,732.9 1085.0,739.0C1073.3,745.1 1067.5,747.2 1060.0,750.5C1052.5,753.8 1049.2,755.2 1040.0,759.0C1030.8,762.8 1018.3,767.8 1005.0,773.0C991.7,778.2 975.0,784.6 960.0,790.5C945.0,796.4 930.0,802.9 915.0,808.5C900.0,814.1 885.0,819.4 870.0,824.3C855.0,829.2 840.0,833.8 825.0,837.8C810.0,841.8 792.5,845.3 780.0,848.0C767.5,850.7 765.4,851.3 750.0,853.8C734.6,856.2 706.2,860.6 687.5,862.5C668.8,864.4 654.2,865.6 637.5,865.0C620.8,864.4 603.8,862.1 587.5,858.8C571.2,855.4 554.6,850.6 540.0,845.0C525.4,839.4 512.5,832.5 500.0,825.0C487.5,817.5 474.6,808.8 465.0,800.0C455.4,791.2 448.8,781.7 442.5,772.5C436.2,763.3 431.3,754.1 427.5,745.0C423.7,735.9 421.4,725.5 419.5,718.0C417.6,710.5 416.4,705.3 416.0,700.0C415.6,694.7 416.6,691.1 417.4,686.2Z" fill="#565a6e" stroke="#15161c" stroke-width="1.56"/>
<g clip-path="url(#cS)">
<path d="M1664.6,285.0C1664.2,289.7 1663.6,304.3 1662.0,313.0C1660.4,321.7 1658.2,329.2 1655.0,337.0C1651.8,344.8 1647.7,352.6 1643.0,360.0C1638.3,367.4 1632.5,375.0 1627.0,381.7C1621.5,388.4 1615.5,394.7 1610.0,400.0C1604.5,405.3 1602.3,406.7 1594.0,413.5C1585.7,420.3 1571.0,433.1 1560.0,440.6C1549.0,448.1 1537.2,453.7 1528.0,458.6C1518.8,463.5 1516.3,464.2 1505.0,470.0C1493.7,475.8 1475.0,485.2 1460.0,493.5C1445.0,501.8 1430.0,510.5 1415.0,519.5C1400.0,528.5 1385.0,537.7 1370.0,547.6C1355.0,557.5 1340.0,568.4 1325.0,579.0C1310.0,589.6 1290.0,604.0 1280.0,611.0C1270.0,618.0 1275.0,614.2 1265.0,621.2C1255.0,628.2 1235.0,642.2 1220.0,652.7C1205.0,663.2 1190.0,674.1 1175.0,684.3C1160.0,694.4 1145.0,704.5 1130.0,713.6C1115.0,722.7 1096.7,732.9 1085.0,739.0C1073.3,745.1 1067.5,747.2 1060.0,750.5C1052.5,753.8 1049.2,755.2 1040.0,759.0C1030.8,762.8 1018.3,767.8 1005.0,773.0C991.7,778.2 975.0,784.6 960.0,790.5C945.0,796.4 930.0,802.9 915.0,808.5C900.0,814.1 885.0,819.4 870.0,824.3C855.0,829.2 840.0,833.8 825.0,837.8C810.0,841.8 792.5,845.3 780.0,848.0C767.5,850.7 765.4,851.3 750.0,853.8C734.6,856.2 706.2,860.6 687.5,862.5C668.8,864.4 654.2,865.6 637.5,865.0C620.8,864.4 603.8,862.1 587.5,858.8C571.2,855.4 554.6,850.6 540.0,845.0C525.4,839.4 512.5,832.5 500.0,825.0C487.5,817.5 474.6,808.8 465.0,800.0C455.4,791.2 448.8,781.7 442.5,772.5C436.2,763.3 431.3,754.1 427.5,745.0C423.7,735.9 421.4,725.5 419.5,718.0C417.6,710.5 416.6,703.0 416.0,700.0" fill="none" stroke="#2f3039" stroke-width="24" filter="url(#b4)"/>
<path d="M1657.0,332.5C1654.7,335.7 1648.8,345.4 1643.0,351.5C1637.2,357.6 1629.8,363.1 1622.0,369.0C1614.2,374.9 1605.5,380.8 1596.0,387.0C1586.5,393.2 1573.8,401.2 1565.0,406.0C1556.2,410.8 1553.2,411.6 1543.5,416.0C1533.8,420.4 1520.6,426.0 1507.0,432.5C1493.4,439.0 1477.0,446.8 1462.0,455.1C1447.0,463.4 1432.0,471.8 1417.0,482.1C1402.0,492.4 1387.0,505.6 1372.0,517.1C1357.0,528.6 1342.0,540.6 1327.0,550.9C1312.0,561.2 1292.0,572.8 1282.0,579.1C1272.0,585.4 1277.0,582.4 1267.0,588.5C1257.0,594.6 1237.0,606.2 1222.0,616.0C1207.0,625.8 1192.0,636.9 1177.0,647.5C1162.0,658.1 1147.0,669.9 1132.0,679.5C1117.0,689.1 1102.0,697.2 1087.0,705.0C1072.0,712.8 1055.3,720.5 1042.0,726.5C1028.7,732.5 1020.3,735.3 1007.0,740.7C993.7,746.1 977.0,753.0 962.0,758.8C947.0,764.6 932.0,770.3 917.0,775.7C902.0,781.1 887.0,786.5 872.0,791.4C857.0,796.3 842.0,800.7 827.0,805.0C812.0,809.3 794.5,814.1 782.0,817.4C769.5,820.6 765.3,822.0 752.0,824.5C738.7,827.0 718.7,830.5 702.0,832.5C685.3,834.5 668.7,835.8 652.0,836.5C635.3,837.2 618.7,837.4 602.0,836.5C585.3,835.6 568.7,834.2 552.0,831.0C535.3,827.8 515.0,821.5 502.0,817.0C489.0,812.5 482.3,809.0 474.0,804.0C465.7,799.0 458.2,793.0 452.0,787.0C445.8,781.0 441.3,774.7 437.0,768.0C432.7,761.3 428.8,754.7 426.0,747.0C423.2,739.3 421.0,726.2 420.0,722.0" fill="none" stroke="#6e7188" stroke-width="16" filter="url(#b4)"/>
</g>
<path d="M417.4,686.2C417.8,679.3 419.0,675.6 420.5,670.4C422.0,665.2 423.9,660.4 426.5,655.0C429.1,649.6 432.1,643.8 436.0,638.0C439.9,632.2 444.7,626.4 450.0,620.5C455.3,614.6 461.5,608.7 468.0,602.5C474.5,596.3 481.3,589.9 489.0,583.5C496.7,577.1 504.7,570.3 514.0,564.0C523.3,557.7 535.0,551.6 545.0,545.7C555.0,539.8 564.8,533.7 574.0,528.5C583.2,523.3 587.3,520.8 600.0,514.5C612.7,508.2 633.3,498.8 650.0,491.0C666.7,483.2 683.3,475.2 700.0,468.0C716.7,460.8 733.3,454.3 750.0,448.0C766.7,441.7 785.0,435.0 800.0,430.0C815.0,425.0 826.7,421.8 840.0,418.0C853.3,414.2 866.7,410.2 880.0,407.0C893.3,403.8 905.0,401.7 920.0,399.0C935.0,396.3 953.3,393.5 970.0,391.0C986.7,388.5 1005.0,386.2 1020.0,384.0C1035.0,381.8 1046.7,380.2 1060.0,378.0C1073.3,375.8 1085.8,373.8 1100.0,371.0C1114.2,368.2 1132.5,364.7 1145.0,361.0C1157.5,357.3 1165.8,353.2 1175.0,349.0C1184.2,344.8 1192.5,340.3 1200.0,336.0C1207.5,331.7 1212.2,328.3 1220.0,323.0C1227.8,317.7 1238.2,310.0 1247.0,304.0C1255.8,298.0 1264.5,292.3 1273.0,287.0C1281.5,281.7 1289.7,276.8 1298.0,272.0C1306.3,267.2 1314.7,262.2 1323.0,258.0C1331.3,253.8 1339.7,250.3 1348.0,247.0C1356.3,243.7 1363.3,241.3 1373.0,238.0C1382.7,234.7 1394.8,230.3 1406.0,227.0C1417.2,223.7 1427.7,220.8 1440.0,218.0C1452.3,215.2 1467.5,212.2 1480.0,210.0C1492.5,207.8 1503.2,206.0 1515.0,205.0C1526.8,204.0 1539.2,203.2 1551.0,204.0C1562.8,204.8 1575.0,206.8 1586.0,210.0C1597.0,213.2 1607.8,217.7 1617.0,223.0C1626.2,228.3 1634.5,235.3 1641.0,242.0C1647.5,248.7 1652.1,255.8 1656.0,263.0C1659.9,270.2 1663.2,278.2 1664.5,285.0C1665.8,291.8 1665.1,297.8 1663.5,304.0C1661.9,310.2 1658.8,316.2 1655.0,322.5C1651.2,328.8 1646.8,335.4 1641.0,341.5C1635.2,347.6 1627.8,353.1 1620.0,359.0C1612.2,364.9 1603.5,370.8 1594.0,377.0C1584.5,383.2 1571.8,391.2 1563.0,396.0C1554.2,400.8 1551.2,401.6 1541.5,406.0C1531.8,410.4 1518.6,416.0 1505.0,422.5C1491.4,429.0 1475.0,436.8 1460.0,445.1C1445.0,453.4 1430.0,461.8 1415.0,472.1C1400.0,482.4 1385.0,495.6 1370.0,507.1C1355.0,518.6 1340.0,530.6 1325.0,540.9C1310.0,551.2 1290.0,562.8 1280.0,569.1C1270.0,575.4 1275.0,572.4 1265.0,578.5C1255.0,584.6 1235.0,596.2 1220.0,606.0C1205.0,615.8 1190.0,626.9 1175.0,637.5C1160.0,648.1 1145.0,659.9 1130.0,669.5C1115.0,679.1 1100.0,687.2 1085.0,695.0C1070.0,702.8 1053.3,710.5 1040.0,716.5C1026.7,722.5 1018.3,725.3 1005.0,730.7C991.7,736.1 975.0,743.0 960.0,748.8C945.0,754.6 930.0,760.3 915.0,765.7C900.0,771.1 885.0,776.5 870.0,781.4C855.0,786.3 840.0,790.7 825.0,795.0C810.0,799.3 792.5,804.1 780.0,807.4C767.5,810.6 763.3,812.0 750.0,814.5C736.7,817.0 716.7,820.5 700.0,822.5C683.3,824.5 666.7,825.8 650.0,826.5C633.3,827.2 616.7,827.4 600.0,826.5C583.3,825.6 566.7,824.2 550.0,821.0C533.3,817.8 513.0,811.5 500.0,807.0C487.0,802.5 480.3,799.0 472.0,794.0C463.7,789.0 456.2,783.0 450.0,777.0C443.8,771.0 439.3,764.7 435.0,758.0C430.7,751.3 426.8,744.7 424.0,737.0C421.2,729.3 419.1,720.5 418.0,712.0C416.9,703.5 417.0,693.1 417.4,686.2Z" fill="#9da2bf" stroke="#15161c" stroke-width="1.44"/>
<path d="M424.8,688.3C425.3,682.8 426.5,678.2 428.1,673.1C429.6,668.1 431.6,663.2 434.2,657.9C436.9,652.5 439.9,646.8 443.7,641.1C447.6,635.4 452.0,629.6 457.2,623.7C462.4,617.9 468.5,611.8 474.8,605.7C481.2,599.7 487.8,593.5 495.3,587.3C502.8,581.1 510.8,574.8 519.9,568.7C529.0,562.6 540.2,556.4 549.9,550.6C559.6,544.8 569.1,538.8 578.1,533.7C587.1,528.6 591.3,526.1 603.7,519.9C616.2,513.8 636.3,504.2 652.6,496.6C669.0,489.1 685.3,481.7 701.6,474.6C718.0,467.5 734.5,460.4 751.0,453.9C767.5,447.5 785.8,441.1 800.7,436.1C815.5,431.1 827.1,427.9 840.3,424.1C853.6,420.3 866.7,416.4 880.0,413.3C893.3,410.1 905.0,407.8 920.0,405.1C935.0,402.4 953.3,399.5 970.0,396.9C986.7,394.4 1005.0,392.1 1020.0,389.9C1035.0,387.8 1046.7,386.1 1060.0,383.9C1073.3,381.8 1085.8,379.7 1100.0,376.9C1114.2,374.1 1132.6,370.8 1145.3,367.1C1158.1,363.4 1167.2,359.2 1176.7,354.9C1186.1,350.7 1194.6,345.9 1202.3,341.4C1210.0,337.0 1215.0,333.5 1223.0,328.1C1230.9,322.8 1241.2,315.2 1250.0,309.3C1258.7,303.3 1267.2,297.7 1275.6,292.4C1284.0,287.2 1292.1,282.4 1300.3,277.6C1308.5,272.8 1316.8,267.9 1325.0,263.8C1333.2,259.6 1341.4,256.1 1349.7,252.8C1357.9,249.4 1364.8,247.1 1374.3,243.8C1383.9,240.4 1395.9,236.1 1407.0,232.8C1418.0,229.4 1428.5,226.6 1440.7,223.8C1452.8,220.9 1467.6,217.8 1480.0,215.6C1492.4,213.4 1503.2,211.6 1515.0,210.6C1526.8,209.6 1539.2,208.9 1551.0,209.8C1562.8,210.7 1575.6,213.0 1586.0,216.2C1596.4,219.3 1605.2,223.5 1613.4,228.6C1621.6,233.8 1629.0,240.5 1635.0,247.1C1641.0,253.8 1646.0,261.3 1649.4,268.3C1652.8,275.2 1655.0,282.3 1655.7,289.0C1656.4,295.6 1655.0,302.2 1653.6,308.0C1652.2,313.7 1650.1,318.4 1647.1,323.6C1644.0,328.8 1640.6,333.7 1635.4,339.3C1630.2,344.9 1623.7,351.2 1616.0,357.2C1608.3,363.3 1598.8,369.6 1589.3,375.5C1579.9,381.4 1567.4,388.2 1559.5,392.5C1551.5,396.8 1550.6,397.2 1541.5,401.4C1532.4,405.5 1518.6,410.8 1505.0,417.1C1491.4,423.5 1475.0,431.4 1460.0,439.7C1445.0,447.9 1430.0,456.6 1415.0,466.7C1400.0,476.9 1385.0,489.5 1370.0,500.8C1355.0,512.1 1340.0,524.2 1325.0,534.6C1310.0,544.9 1290.0,556.7 1280.0,562.8C1270.0,568.9 1275.0,565.2 1265.0,571.1C1255.0,577.1 1235.0,588.5 1220.0,598.3C1205.0,608.1 1190.0,619.1 1175.0,629.8C1160.0,640.5 1145.0,652.6 1130.0,662.4C1115.0,672.1 1100.0,680.2 1085.0,688.2C1070.0,696.2 1053.3,704.4 1040.0,710.6C1026.7,716.8 1018.3,719.9 1005.0,725.3C991.7,730.8 975.0,737.7 960.0,743.4C945.0,749.0 930.0,754.1 915.0,759.4C900.0,764.7 885.0,770.1 870.0,775.2C855.0,780.2 840.0,785.1 825.0,789.6C810.0,794.0 792.5,798.7 780.0,802.0C767.5,805.2 763.3,806.7 750.0,809.3C736.7,811.9 716.7,815.3 700.0,817.3C683.3,819.3 666.7,820.6 650.0,821.3C633.3,822.0 616.7,822.3 600.0,821.3C583.3,820.3 566.7,819.3 550.0,815.4C533.3,811.5 511.8,803.0 500.0,797.8C488.2,792.6 486.1,789.2 479.2,784.4C472.4,779.5 464.9,774.4 458.8,768.5C452.6,762.7 446.9,756.1 442.2,749.3C437.5,742.6 433.3,735.3 430.4,728.2C427.6,721.0 426.0,713.1 425.0,706.5C424.1,699.8 424.3,693.9 424.8,688.3Z M429.5,689.7C430.1,685.0 431.6,680.0 433.3,675.0C435.0,670.1 437.2,665.3 439.8,660.0C442.5,654.7 445.6,648.9 449.3,643.3C453.1,637.6 457.3,631.9 462.4,626.1C467.5,620.2 473.5,614.1 479.8,608.1C486.0,602.1 492.4,596.0 499.9,590.0C507.3,584.0 515.3,578.0 524.2,572.1C533.2,566.1 544.1,560.1 553.7,554.4C563.2,548.7 572.6,543.0 581.4,538.0C590.3,533.0 594.6,530.6 606.9,524.6C619.2,518.6 639.1,509.2 655.1,501.9C671.2,494.6 687.1,487.9 703.2,480.8C719.3,473.7 735.6,466.0 751.9,459.5C768.3,453.0 786.5,446.8 801.3,441.8C816.1,436.9 827.5,433.6 840.6,429.8C853.8,426.1 866.8,422.3 880.0,419.2C893.2,416.0 905.0,413.6 920.0,410.8C935.0,408.1 953.3,405.1 970.0,402.5C986.7,400.0 1005.0,397.7 1020.0,395.5C1035.0,393.4 1046.7,391.7 1060.0,389.5C1073.3,387.4 1085.7,385.3 1100.0,382.5C1114.3,379.7 1132.6,376.5 1145.6,372.8C1158.7,369.2 1168.4,364.9 1178.2,360.5C1188.0,356.1 1196.6,351.2 1204.5,346.6C1212.4,342.0 1217.7,338.3 1225.8,332.9C1233.8,327.5 1244.0,320.1 1252.8,314.2C1261.5,308.3 1269.8,302.8 1278.1,297.6C1286.4,292.3 1294.4,287.6 1302.5,282.9C1310.6,278.2 1318.7,273.3 1326.8,269.2C1335.0,265.1 1343.1,261.5 1351.2,258.2C1359.3,254.9 1366.1,252.5 1375.6,249.2C1385.0,245.9 1397.0,241.5 1407.9,238.2C1418.9,234.9 1429.3,232.1 1441.3,229.2C1453.3,226.3 1467.7,223.1 1480.0,220.9C1492.3,218.7 1503.2,216.9 1515.0,215.9C1526.8,214.8 1539.2,214.0 1551.0,214.7C1562.8,215.4 1575.9,217.3 1586.0,220.0C1596.1,222.8 1604.0,226.2 1611.9,231.0C1619.8,235.7 1627.4,242.1 1633.4,248.5C1639.4,254.9 1644.6,262.5 1648.0,269.4C1651.5,276.2 1653.3,283.2 1653.9,289.8C1654.5,296.3 1653.0,303.1 1651.6,308.8C1650.2,314.4 1648.3,318.8 1645.5,323.8C1642.6,328.8 1639.3,333.3 1634.3,338.8C1629.3,344.3 1622.9,350.9 1615.3,356.9C1607.7,363.0 1598.0,369.4 1588.6,375.3C1579.2,381.1 1566.8,387.7 1559.0,392.0C1551.1,396.2 1550.5,396.7 1541.5,400.8C1532.5,404.8 1518.6,410.1 1505.0,416.5C1491.4,422.8 1475.0,430.7 1460.0,439.0C1445.0,447.2 1430.0,455.9 1415.0,466.1C1400.0,476.2 1385.0,488.7 1370.0,500.0C1355.0,511.3 1340.0,523.5 1325.0,533.8C1310.0,544.1 1290.0,555.9 1280.0,562.0C1270.0,568.1 1275.0,564.3 1265.0,570.2C1255.0,576.1 1235.0,587.6 1220.0,597.4C1205.0,607.1 1190.0,618.2 1175.0,628.9C1160.0,639.5 1145.0,651.7 1130.0,661.5C1115.0,671.2 1100.0,679.3 1085.0,687.4C1070.0,695.4 1053.3,703.6 1040.0,709.8C1026.7,716.1 1018.3,719.2 1005.0,724.7C991.7,730.1 975.0,737.0 960.0,742.7C945.0,748.3 930.0,753.3 915.0,758.6C900.0,763.9 885.0,769.3 870.0,774.4C855.0,779.4 840.0,784.4 825.0,788.9C810.0,793.4 792.5,798.0 780.0,801.3C767.5,804.6 763.3,806.1 750.0,808.6C736.7,811.2 716.7,814.6 700.0,816.6C683.3,818.6 666.7,820.0 650.0,820.6C633.3,821.3 616.7,821.6 600.0,820.6C583.3,819.7 566.7,818.7 550.0,814.7C533.3,810.7 511.6,801.8 500.0,796.5C488.4,791.1 487.1,787.5 480.6,782.5C474.2,777.4 467.2,772.2 461.2,766.1C455.3,760.0 449.7,752.9 445.2,745.8C440.6,738.7 436.6,730.4 434.0,723.3C431.3,716.2 430.1,708.6 429.4,703.0C428.7,697.4 428.8,694.3 429.5,689.7Z" fill-rule="evenodd" fill="#6a6d85" stroke="#15161c" stroke-width="1.20"/>
<path d="M437.5,692.0C438.2,688.8 439.8,682.8 441.5,678.0C443.2,673.2 445.3,668.2 448.0,663.0C450.7,657.8 453.8,652.1 457.5,646.5C461.2,640.9 465.1,635.3 470.0,629.5C474.9,623.7 480.9,617.4 487.0,611.5C493.1,605.6 499.2,599.8 506.5,594.0C513.8,588.2 521.8,582.7 530.5,577.0C539.2,571.3 549.8,565.2 559.0,559.7C568.2,554.2 577.3,548.7 586.0,543.8C594.7,538.9 599.0,536.5 611.0,530.5C623.0,524.5 642.3,515.1 658.0,508.0C673.7,500.9 689.2,495.0 705.0,488.0C720.8,481.0 736.8,472.6 753.0,466.0C769.2,459.4 787.3,453.4 802.0,448.5C816.7,443.6 828.0,440.2 841.0,436.5C854.0,432.8 866.8,429.2 880.0,426.0C893.2,422.8 905.0,420.3 920.0,417.5C935.0,414.7 953.3,411.6 970.0,409.0C986.7,406.4 1005.0,404.2 1020.0,402.0C1035.0,399.8 1046.7,398.2 1060.0,396.0C1073.3,393.8 1085.7,391.8 1100.0,389.0C1114.3,386.2 1132.7,383.2 1146.0,379.5C1159.3,375.8 1169.8,371.5 1180.0,367.0C1190.2,362.5 1198.8,357.2 1207.0,352.5C1215.2,347.8 1220.8,343.9 1229.0,338.5C1237.2,333.1 1247.3,325.8 1256.0,320.0C1264.7,314.2 1272.8,308.7 1281.0,303.5C1289.2,298.3 1297.0,293.7 1305.0,289.0C1313.0,284.3 1321.0,279.6 1329.0,275.5C1337.0,271.4 1345.0,267.8 1353.0,264.5C1361.0,261.2 1367.7,258.8 1377.0,255.5C1386.3,252.2 1398.2,247.8 1409.0,244.5C1419.8,241.2 1430.2,238.4 1442.0,235.5C1453.8,232.6 1467.8,229.2 1480.0,227.0C1492.2,224.8 1503.2,223.0 1515.0,222.0C1526.8,221.0 1539.2,220.2 1551.0,221.0C1562.8,221.8 1576.5,224.0 1586.0,226.7C1595.5,229.4 1601.2,232.4 1608.0,237.0C1614.8,241.6 1621.5,247.7 1627.0,254.0C1632.5,260.3 1638.1,268.3 1641.0,275.0C1643.9,281.7 1644.5,287.7 1644.5,294.0C1644.5,300.3 1642.2,307.8 1641.0,313.0C1639.8,318.2 1639.0,321.1 1637.0,325.0C1635.0,328.9 1633.1,331.6 1629.0,336.7C1624.9,341.8 1619.6,349.4 1612.5,355.7C1605.4,362.0 1595.6,368.7 1586.5,374.6C1577.4,380.5 1565.5,386.8 1558.0,391.0C1550.5,395.2 1550.3,395.9 1541.5,400.0C1532.7,404.1 1518.6,409.4 1505.0,415.8C1491.4,422.2 1475.0,430.0 1460.0,438.3C1445.0,446.6 1430.0,455.2 1415.0,465.4C1400.0,475.5 1385.0,487.9 1370.0,499.2C1355.0,510.5 1340.0,522.7 1325.0,533.0C1310.0,543.3 1290.0,555.2 1280.0,561.2C1270.0,567.2 1275.0,563.4 1265.0,569.3C1255.0,575.2 1235.0,586.6 1220.0,596.4C1205.0,606.2 1190.0,617.2 1175.0,627.9C1160.0,638.6 1145.0,650.8 1130.0,660.6C1115.0,670.4 1100.0,678.4 1085.0,686.5C1070.0,694.6 1053.3,702.9 1040.0,709.1C1026.7,715.4 1018.3,718.5 1005.0,724.0C991.7,729.5 975.0,736.4 960.0,742.0C945.0,747.6 930.0,752.5 915.0,757.8C900.0,763.1 885.0,768.5 870.0,773.6C855.0,778.7 840.0,783.7 825.0,788.2C810.0,792.7 792.5,797.3 780.0,800.6C767.5,803.9 763.3,805.4 750.0,808.0C736.7,810.6 716.7,814.0 700.0,816.0C683.3,818.0 666.7,819.3 650.0,820.0C633.3,820.7 616.7,821.0 600.0,820.0C583.3,819.0 566.7,818.2 550.0,814.0C533.3,809.8 511.2,800.7 500.0,795.0C488.8,789.3 488.3,785.4 482.5,780.0C476.7,774.6 470.4,769.2 465.0,762.5C459.6,755.8 454.2,747.9 450.0,740.0C445.8,732.1 442.2,722.2 440.0,715.0C437.8,707.8 437.4,700.8 437.0,697.0C436.6,693.2 436.8,695.2 437.5,692.0Z" fill="#8a8ea8" stroke="#15161c" stroke-width="1.44"/>
<g clip-path="url(#cB)">
<path d="M441.5,702.0C442.2,699.7 443.8,692.8 445.5,688.0C447.2,683.2 449.3,678.2 452.0,673.0C454.7,667.8 457.8,662.1 461.5,656.5C465.2,650.9 469.1,645.3 474.0,639.5C478.9,633.7 484.9,627.4 491.0,621.5C497.1,615.6 503.2,609.8 510.5,604.0C517.8,598.2 525.8,592.7 534.5,587.0C543.2,581.3 553.8,575.2 563.0,569.7C572.2,564.2 581.3,558.7 590.0,553.8C598.7,548.9 603.0,546.5 615.0,540.5C627.0,534.5 646.3,525.1 662.0,518.0C677.7,510.9 693.2,505.0 709.0,498.0C724.8,491.0 740.8,482.6 757.0,476.0C773.2,469.4 791.3,463.4 806.0,458.5C820.7,453.6 832.0,450.2 845.0,446.5C858.0,442.8 870.8,439.2 884.0,436.0C897.2,432.8 909.0,430.3 924.0,427.5C939.0,424.7 957.3,421.6 974.0,419.0C990.7,416.4 1009.0,414.2 1024.0,412.0C1039.0,409.8 1050.7,408.2 1064.0,406.0C1077.3,403.8 1089.7,401.8 1104.0,399.0C1118.3,396.2 1136.7,393.2 1150.0,389.5C1163.3,385.8 1173.8,381.5 1184.0,377.0C1194.2,372.5 1202.8,367.2 1211.0,362.5C1219.2,357.8 1224.8,353.9 1233.0,348.5C1241.2,343.1 1251.3,335.8 1260.0,330.0C1268.7,324.2 1276.8,318.7 1285.0,313.5C1293.2,308.3 1301.0,303.7 1309.0,299.0C1317.0,294.3 1325.0,289.6 1333.0,285.5C1341.0,281.4 1349.0,277.8 1357.0,274.5C1365.0,271.2 1371.7,268.8 1381.0,265.5C1390.3,262.2 1402.2,257.8 1413.0,254.5C1423.8,251.2 1434.2,248.4 1446.0,245.5C1457.8,242.6 1471.8,239.2 1484.0,237.0C1496.2,234.8 1507.2,233.0 1519.0,232.0C1530.8,231.0 1543.2,230.2 1555.0,231.0C1566.8,231.8 1580.5,234.0 1590.0,236.7C1599.5,239.4 1605.2,242.4 1612.0,247.0C1618.8,251.6 1625.5,257.7 1631.0,264.0C1636.5,270.3 1642.1,278.3 1645.0,285.0C1647.9,291.7 1648.5,297.7 1648.5,304.0C1648.5,310.3 1645.6,319.8 1645.0,323.0" fill="none" stroke="#777b92" stroke-width="34" filter="url(#b8)"/>
<defs><linearGradient id="gH" gradientUnits="userSpaceOnUse" x1="480" y1="0" x2="1000" y2="0"><stop offset="0" stop-color="#a0a4c0"/><stop offset="0.5" stop-color="#a6aac7"/><stop offset="1" stop-color="#b7bbd6"/></linearGradient></defs>
<path d="M492.0,760.0C490.3,755.0 483.0,740.0 482.0,730.0C481.0,720.0 482.2,710.3 486.0,700.0C489.8,689.7 496.8,678.0 505.0,668.0C513.2,658.0 523.3,649.3 535.0,640.0C546.7,630.7 560.0,620.7 575.0,612.0C590.0,603.3 605.8,596.7 625.0,588.0C644.2,579.3 665.8,570.0 690.0,560.0C714.2,550.0 741.7,538.0 770.0,528.0C798.3,518.0 830.0,508.0 860.0,500.0C890.0,492.0 918.3,486.0 950.0,480.0C981.7,474.0 1018.3,469.5 1050.0,464.0C1081.7,458.5 1113.3,454.3 1140.0,447.0C1166.7,439.7 1188.3,430.3 1210.0,420.0C1231.7,409.7 1250.0,396.3 1270.0,385.0C1290.0,373.7 1308.3,362.0 1330.0,352.0C1351.7,342.0 1376.7,332.8 1400.0,325.0C1423.3,317.2 1458.3,308.3 1470.0,305.0" fill="none" stroke="url(#gH)" stroke-width="34" filter="url(#b12)"/>
<path d="M770.0,528.0C785.0,523.3 830.0,508.0 860.0,500.0C890.0,492.0 918.3,486.0 950.0,480.0C981.7,474.0 1018.3,469.5 1050.0,464.0C1081.7,458.5 1113.3,454.3 1140.0,447.0C1166.7,439.7 1188.3,430.3 1210.0,420.0C1231.7,409.7 1250.0,396.3 1270.0,385.0C1290.0,373.7 1308.3,362.0 1330.0,352.0C1351.7,342.0 1376.7,332.8 1400.0,325.0C1423.3,317.2 1458.3,308.3 1470.0,305.0" fill="none" stroke="#c9cce6" stroke-width="16" filter="url(#b8)"/>
<path d="M1290,505 L1355,478 L1430,452 L1445,450 L1400,482 L1340,527 L1290,558Z" fill="#a2a6c3" filter="url(#b4)"/>
<path d="M1600,232 Q1650,262 1650,300 Q1640,335 1590,372 L1560,388 Q1612,345 1626,300 Q1632,262 1596,236Z" fill="#70738b" filter="url(#b4)"/>
<ellipse cx="1497" cy="333" rx="82" ry="50" fill="#bfc2dc" filter="url(#b12)" transform="rotate(-22 1497 333)"/>
<ellipse cx="1480" cy="340" rx="40" ry="24" fill="#c9cce6" filter="url(#b8)" transform="rotate(-22 1480 340)"/>
</g>
<defs><linearGradient id="gFloor" gradientUnits="userSpaceOnUse" x1="800" y1="570" x2="865" y2="790"><stop offset="0" stop-color="#979bb6"/><stop offset="0.5" stop-color="#9b9fbb"/><stop offset="1" stop-color="#a6aac7"/></linearGradient></defs>
<path d="M557.5,812.5C552.9,808.3 536.2,794.6 530.0,787.5C523.8,780.4 522.4,776.7 520.0,770.0C517.6,763.3 515.5,755.8 515.5,747.5C515.5,739.2 517.2,728.2 520.0,720.0C522.8,711.8 527.0,704.7 532.0,698.0C537.0,691.3 544.3,685.5 549.8,680.0C555.3,674.5 559.9,669.4 565.0,665.0C570.1,660.6 571.8,659.3 580.4,653.5C589.0,647.7 606.6,636.0 616.5,630.0C626.4,624.0 626.1,623.7 640.0,617.4C653.9,611.1 680.0,600.4 700.0,592.0C720.0,583.6 738.3,575.5 760.0,567.0C781.7,558.5 810.0,548.2 830.0,541.0C850.0,533.8 858.3,529.8 880.0,524.0C901.7,518.2 938.3,510.7 960.0,506.0C981.7,501.3 993.3,499.2 1010.0,496.0C1026.7,492.8 1043.3,489.3 1060.0,486.5C1076.7,483.7 1093.3,481.4 1110.0,479.2C1126.7,477.0 1143.3,474.6 1160.0,473.4C1176.7,472.1 1196.1,471.6 1210.0,471.7C1223.9,471.8 1232.4,472.8 1243.5,474.2C1254.6,475.6 1267.9,477.8 1276.8,480.0C1285.7,482.2 1291.8,485.0 1296.9,487.5C1302.1,490.0 1305.2,491.8 1307.7,495.0C1310.2,498.2 1311.6,502.2 1311.9,506.7C1312.2,511.1 1311.1,516.4 1309.4,521.7C1307.7,527.0 1304.8,533.1 1301.9,538.4C1299.0,543.7 1293.5,550.9 1291.8,553.4L1280.0,561.2 L1265.0,569.3 L1220.0,596.4 L1175.0,627.9 L1130.0,660.6 L1085.0,686.5 L1040.0,709.1 L1005.0,724.0 L960.0,742.0 L915.0,757.8 L870.0,773.6 L825.0,788.2 L780.0,800.6 L750.0,808.0 L700.0,816.0 L650.0,820.0 L600.0,820.0Z" fill="url(#gFloor)"/>
<path d="M557.5,812.5C552.9,808.3 536.2,794.6 530.0,787.5C523.8,780.4 522.4,776.7 520.0,770.0C517.6,763.3 515.5,755.8 515.5,747.5C515.5,739.2 517.2,728.2 520.0,720.0C522.8,711.8 527.0,704.7 532.0,698.0C537.0,691.3 544.3,685.5 549.8,680.0C555.3,674.5 559.9,669.4 565.0,665.0C570.1,660.6 571.8,659.3 580.4,653.5C589.0,647.7 606.6,636.0 616.5,630.0C626.4,624.0 626.1,623.7 640.0,617.4C653.9,611.1 680.0,600.4 700.0,592.0C720.0,583.6 738.3,575.5 760.0,567.0C781.7,558.5 810.0,548.2 830.0,541.0C850.0,533.8 858.3,529.8 880.0,524.0C901.7,518.2 938.3,510.7 960.0,506.0C981.7,501.3 993.3,499.2 1010.0,496.0C1026.7,492.8 1043.3,489.3 1060.0,486.5C1076.7,483.7 1093.3,481.4 1110.0,479.2C1126.7,477.0 1143.3,474.6 1160.0,473.4C1176.7,472.1 1196.1,471.6 1210.0,471.7C1223.9,471.8 1232.4,472.8 1243.5,474.2C1254.6,475.6 1267.9,477.8 1276.8,480.0C1285.7,482.2 1291.8,485.0 1296.9,487.5C1302.1,490.0 1305.2,491.8 1307.7,495.0C1310.2,498.2 1311.6,502.2 1311.9,506.7C1312.2,511.1 1311.1,516.4 1309.4,521.7C1307.7,527.0 1304.8,533.1 1301.9,538.4C1299.0,543.7 1293.5,550.9 1291.8,553.4" fill="none" stroke="#15161c" stroke-width="1.08"/>
<path d="M496,791 Q515,791 530,787.5" fill="none" stroke="#15161c" stroke-width="0.96"/>
<path d="M1307.7,495 L1353.6,478.4" fill="none" stroke="#15161c" stroke-width="0.96"/>
<path d="M1631.5,258.0C1631.2,262.4 1632.0,275.5 1630.0,284.7C1628.0,293.9 1624.9,303.2 1619.6,313.1C1614.3,323.0 1607.8,334.0 1598.3,343.8C1588.8,353.6 1574.6,364.3 1562.8,372.2C1551.0,380.1 1538.6,385.6 1527.3,391.2C1516.0,396.8 1505.7,400.9 1495.0,406.0C1484.3,411.1 1468.3,419.3 1463.0,422.0" fill="none" stroke="#15161c" stroke-width="1.08"/>
<defs><linearGradient id="gWall" x1="0" y1="0" x2="1" y2="0"><stop offset="0" stop-color="#55586b"/><stop offset="0.5" stop-color="#676a81"/><stop offset="1" stop-color="#73768e"/></linearGradient><linearGradient id="gHole" x1="0" y1="0" x2="1" y2="0"><stop offset="0" stop-color="#787c94"/><stop offset="0.35" stop-color="#62657a"/><stop offset="1" stop-color="#555868"/></linearGradient></defs>
<path d="M667.5,626.4C667.2,625.0 663.8,621.8 665.5,618.0C667.2,614.2 673.1,608.1 678.0,603.4C682.9,598.7 689.1,594.2 695.0,590.0C700.9,585.8 706.9,582.2 713.4,578.4C719.9,574.6 727.1,570.5 734.0,567.0C740.9,563.5 748.0,560.2 755.0,557.5C762.0,554.8 769.0,552.9 776.0,551.0C783.0,549.1 789.8,547.4 796.8,546.0C803.8,544.6 811.0,543.4 818.0,542.5C825.0,541.6 832.0,540.6 838.5,540.9C845.0,541.1 852.6,542.1 857.3,544.0C862.0,545.9 865.1,550.9 866.7,552.3C868.9,551.8 872.5,548.6 880.0,549.0C887.5,549.4 901.0,551.2 911.5,554.4C922.0,557.6 934.1,562.6 942.8,568.0C951.5,573.4 958.2,580.1 963.7,586.7C969.2,593.3 972.9,600.7 976.0,607.6C979.1,614.5 981.0,622.2 982.4,628.4C983.8,634.6 984.5,640.1 984.5,645.0C984.5,649.9 984.1,653.0 982.4,657.5C980.7,662.0 977.2,668.6 974.1,672.1C971.0,675.6 965.4,677.4 963.7,678.4C964.1,679.8 967.2,682.5 965.8,686.7C964.4,690.9 960.9,696.5 955.3,703.4C949.7,710.3 941.4,721.1 932.4,728.4C923.4,735.7 913.3,741.6 901.1,747.2C888.9,752.8 873.3,758.3 859.4,761.8C845.5,765.3 829.5,767.4 817.7,768.1C805.9,768.8 796.1,767.0 788.5,766.0C780.9,765.0 776.0,763.7 771.8,761.8C767.6,759.9 764.9,755.7 763.5,754.5C761.4,755.0 755.9,757.6 751.0,757.6C746.1,757.6 740.6,756.6 734.3,754.5C728.0,752.4 721.4,749.1 713.4,745.1C705.4,741.1 694.3,736.4 686.3,730.5C678.3,724.6 671.4,717.7 665.5,709.7C659.6,701.7 653.9,690.6 650.9,682.6C647.9,674.6 647.7,668.3 647.7,661.7C647.7,655.1 649.2,647.7 650.9,642.9C652.6,638.1 655.2,635.8 658.0,633.0C660.8,630.2 665.9,627.5 667.5,626.4Z" transform="translate(0,16)" fill="url(#gWall)" stroke="#15161c" stroke-width="1.20"/>
<path d="M667.5,626.4C667.2,625.0 663.8,621.8 665.5,618.0C667.2,614.2 673.1,608.1 678.0,603.4C682.9,598.7 689.1,594.2 695.0,590.0C700.9,585.8 706.9,582.2 713.4,578.4C719.9,574.6 727.1,570.5 734.0,567.0C740.9,563.5 748.0,560.2 755.0,557.5C762.0,554.8 769.0,552.9 776.0,551.0C783.0,549.1 789.8,547.4 796.8,546.0C803.8,544.6 811.0,543.4 818.0,542.5C825.0,541.6 832.0,540.6 838.5,540.9C845.0,541.1 852.6,542.1 857.3,544.0C862.0,545.9 865.1,550.9 866.7,552.3C868.9,551.8 872.5,548.6 880.0,549.0C887.5,549.4 901.0,551.2 911.5,554.4C922.0,557.6 934.1,562.6 942.8,568.0C951.5,573.4 958.2,580.1 963.7,586.7C969.2,593.3 972.9,600.7 976.0,607.6C979.1,614.5 981.0,622.2 982.4,628.4C983.8,634.6 984.5,640.1 984.5,645.0C984.5,649.9 984.1,653.0 982.4,657.5C980.7,662.0 977.2,668.6 974.1,672.1C971.0,675.6 965.4,677.4 963.7,678.4C964.1,679.8 967.2,682.5 965.8,686.7C964.4,690.9 960.9,696.5 955.3,703.4C949.7,710.3 941.4,721.1 932.4,728.4C923.4,735.7 913.3,741.6 901.1,747.2C888.9,752.8 873.3,758.3 859.4,761.8C845.5,765.3 829.5,767.4 817.7,768.1C805.9,768.8 796.1,767.0 788.5,766.0C780.9,765.0 776.0,763.7 771.8,761.8C767.6,759.9 764.9,755.7 763.5,754.5C761.4,755.0 755.9,757.6 751.0,757.6C746.1,757.6 740.6,756.6 734.3,754.5C728.0,752.4 721.4,749.1 713.4,745.1C705.4,741.1 694.3,736.4 686.3,730.5C678.3,724.6 671.4,717.7 665.5,709.7C659.6,701.7 653.9,690.6 650.9,682.6C647.9,674.6 647.7,668.3 647.7,661.7C647.7,655.1 649.2,647.7 650.9,642.9C652.6,638.1 655.2,635.8 658.0,633.0C660.8,630.2 665.9,627.5 667.5,626.4Z" transform="translate(0,14)" fill="url(#gWall)" stroke="url(#gWall)" stroke-width="1"/>
<path d="M667.5,626.4C667.2,625.0 663.8,621.8 665.5,618.0C667.2,614.2 673.1,608.1 678.0,603.4C682.9,598.7 689.1,594.2 695.0,590.0C700.9,585.8 706.9,582.2 713.4,578.4C719.9,574.6 727.1,570.5 734.0,567.0C740.9,563.5 748.0,560.2 755.0,557.5C762.0,554.8 769.0,552.9 776.0,551.0C783.0,549.1 789.8,547.4 796.8,546.0C803.8,544.6 811.0,543.4 818.0,542.5C825.0,541.6 832.0,540.6 838.5,540.9C845.0,541.1 852.6,542.1 857.3,544.0C862.0,545.9 865.1,550.9 866.7,552.3C868.9,551.8 872.5,548.6 880.0,549.0C887.5,549.4 901.0,551.2 911.5,554.4C922.0,557.6 934.1,562.6 942.8,568.0C951.5,573.4 958.2,580.1 963.7,586.7C969.2,593.3 972.9,600.7 976.0,607.6C979.1,614.5 981.0,622.2 982.4,628.4C983.8,634.6 984.5,640.1 984.5,645.0C984.5,649.9 984.1,653.0 982.4,657.5C980.7,662.0 977.2,668.6 974.1,672.1C971.0,675.6 965.4,677.4 963.7,678.4C964.1,679.8 967.2,682.5 965.8,686.7C964.4,690.9 960.9,696.5 955.3,703.4C949.7,710.3 941.4,721.1 932.4,728.4C923.4,735.7 913.3,741.6 901.1,747.2C888.9,752.8 873.3,758.3 859.4,761.8C845.5,765.3 829.5,767.4 817.7,768.1C805.9,768.8 796.1,767.0 788.5,766.0C780.9,765.0 776.0,763.7 771.8,761.8C767.6,759.9 764.9,755.7 763.5,754.5C761.4,755.0 755.9,757.6 751.0,757.6C746.1,757.6 740.6,756.6 734.3,754.5C728.0,752.4 721.4,749.1 713.4,745.1C705.4,741.1 694.3,736.4 686.3,730.5C678.3,724.6 671.4,717.7 665.5,709.7C659.6,701.7 653.9,690.6 650.9,682.6C647.9,674.6 647.7,668.3 647.7,661.7C647.7,655.1 649.2,647.7 650.9,642.9C652.6,638.1 655.2,635.8 658.0,633.0C660.8,630.2 665.9,627.5 667.5,626.4Z" transform="translate(0,12)" fill="url(#gWall)" stroke="url(#gWall)" stroke-width="1"/>
<path d="M667.5,626.4C667.2,625.0 663.8,621.8 665.5,618.0C667.2,614.2 673.1,608.1 678.0,603.4C682.9,598.7 689.1,594.2 695.0,590.0C700.9,585.8 706.9,582.2 713.4,578.4C719.9,574.6 727.1,570.5 734.0,567.0C740.9,563.5 748.0,560.2 755.0,557.5C762.0,554.8 769.0,552.9 776.0,551.0C783.0,549.1 789.8,547.4 796.8,546.0C803.8,544.6 811.0,543.4 818.0,542.5C825.0,541.6 832.0,540.6 838.5,540.9C845.0,541.1 852.6,542.1 857.3,544.0C862.0,545.9 865.1,550.9 866.7,552.3C868.9,551.8 872.5,548.6 880.0,549.0C887.5,549.4 901.0,551.2 911.5,554.4C922.0,557.6 934.1,562.6 942.8,568.0C951.5,573.4 958.2,580.1 963.7,586.7C969.2,593.3 972.9,600.7 976.0,607.6C979.1,614.5 981.0,622.2 982.4,628.4C983.8,634.6 984.5,640.1 984.5,645.0C984.5,649.9 984.1,653.0 982.4,657.5C980.7,662.0 977.2,668.6 974.1,672.1C971.0,675.6 965.4,677.4 963.7,678.4C964.1,679.8 967.2,682.5 965.8,686.7C964.4,690.9 960.9,696.5 955.3,703.4C949.7,710.3 941.4,721.1 932.4,728.4C923.4,735.7 913.3,741.6 901.1,747.2C888.9,752.8 873.3,758.3 859.4,761.8C845.5,765.3 829.5,767.4 817.7,768.1C805.9,768.8 796.1,767.0 788.5,766.0C780.9,765.0 776.0,763.7 771.8,761.8C767.6,759.9 764.9,755.7 763.5,754.5C761.4,755.0 755.9,757.6 751.0,757.6C746.1,757.6 740.6,756.6 734.3,754.5C728.0,752.4 721.4,749.1 713.4,745.1C705.4,741.1 694.3,736.4 686.3,730.5C678.3,724.6 671.4,717.7 665.5,709.7C659.6,701.7 653.9,690.6 650.9,682.6C647.9,674.6 647.7,668.3 647.7,661.7C647.7,655.1 649.2,647.7 650.9,642.9C652.6,638.1 655.2,635.8 658.0,633.0C660.8,630.2 665.9,627.5 667.5,626.4Z" transform="translate(0,10)" fill="url(#gWall)" stroke="url(#gWall)" stroke-width="1"/>
<path d="M667.5,626.4C667.2,625.0 663.8,621.8 665.5,618.0C667.2,614.2 673.1,608.1 678.0,603.4C682.9,598.7 689.1,594.2 695.0,590.0C700.9,585.8 706.9,582.2 713.4,578.4C719.9,574.6 727.1,570.5 734.0,567.0C740.9,563.5 748.0,560.2 755.0,557.5C762.0,554.8 769.0,552.9 776.0,551.0C783.0,549.1 789.8,547.4 796.8,546.0C803.8,544.6 811.0,543.4 818.0,542.5C825.0,541.6 832.0,540.6 838.5,540.9C845.0,541.1 852.6,542.1 857.3,544.0C862.0,545.9 865.1,550.9 866.7,552.3C868.9,551.8 872.5,548.6 880.0,549.0C887.5,549.4 901.0,551.2 911.5,554.4C922.0,557.6 934.1,562.6 942.8,568.0C951.5,573.4 958.2,580.1 963.7,586.7C969.2,593.3 972.9,600.7 976.0,607.6C979.1,614.5 981.0,622.2 982.4,628.4C983.8,634.6 984.5,640.1 984.5,645.0C984.5,649.9 984.1,653.0 982.4,657.5C980.7,662.0 977.2,668.6 974.1,672.1C971.0,675.6 965.4,677.4 963.7,678.4C964.1,679.8 967.2,682.5 965.8,686.7C964.4,690.9 960.9,696.5 955.3,703.4C949.7,710.3 941.4,721.1 932.4,728.4C923.4,735.7 913.3,741.6 901.1,747.2C888.9,752.8 873.3,758.3 859.4,761.8C845.5,765.3 829.5,767.4 817.7,768.1C805.9,768.8 796.1,767.0 788.5,766.0C780.9,765.0 776.0,763.7 771.8,761.8C767.6,759.9 764.9,755.7 763.5,754.5C761.4,755.0 755.9,757.6 751.0,757.6C746.1,757.6 740.6,756.6 734.3,754.5C728.0,752.4 721.4,749.1 713.4,745.1C705.4,741.1 694.3,736.4 686.3,730.5C678.3,724.6 671.4,717.7 665.5,709.7C659.6,701.7 653.9,690.6 650.9,682.6C647.9,674.6 647.7,668.3 647.7,661.7C647.7,655.1 649.2,647.7 650.9,642.9C652.6,638.1 655.2,635.8 658.0,633.0C660.8,630.2 665.9,627.5 667.5,626.4Z" transform="translate(0,8)" fill="url(#gWall)" stroke="url(#gWall)" stroke-width="1"/>
<path d="M667.5,626.4C667.2,625.0 663.8,621.8 665.5,618.0C667.2,614.2 673.1,608.1 678.0,603.4C682.9,598.7 689.1,594.2 695.0,590.0C700.9,585.8 706.9,582.2 713.4,578.4C719.9,574.6 727.1,570.5 734.0,567.0C740.9,563.5 748.0,560.2 755.0,557.5C762.0,554.8 769.0,552.9 776.0,551.0C783.0,549.1 789.8,547.4 796.8,546.0C803.8,544.6 811.0,543.4 818.0,542.5C825.0,541.6 832.0,540.6 838.5,540.9C845.0,541.1 852.6,542.1 857.3,544.0C862.0,545.9 865.1,550.9 866.7,552.3C868.9,551.8 872.5,548.6 880.0,549.0C887.5,549.4 901.0,551.2 911.5,554.4C922.0,557.6 934.1,562.6 942.8,568.0C951.5,573.4 958.2,580.1 963.7,586.7C969.2,593.3 972.9,600.7 976.0,607.6C979.1,614.5 981.0,622.2 982.4,628.4C983.8,634.6 984.5,640.1 984.5,645.0C984.5,649.9 984.1,653.0 982.4,657.5C980.7,662.0 977.2,668.6 974.1,672.1C971.0,675.6 965.4,677.4 963.7,678.4C964.1,679.8 967.2,682.5 965.8,686.7C964.4,690.9 960.9,696.5 955.3,703.4C949.7,710.3 941.4,721.1 932.4,728.4C923.4,735.7 913.3,741.6 901.1,747.2C888.9,752.8 873.3,758.3 859.4,761.8C845.5,765.3 829.5,767.4 817.7,768.1C805.9,768.8 796.1,767.0 788.5,766.0C780.9,765.0 776.0,763.7 771.8,761.8C767.6,759.9 764.9,755.7 763.5,754.5C761.4,755.0 755.9,757.6 751.0,757.6C746.1,757.6 740.6,756.6 734.3,754.5C728.0,752.4 721.4,749.1 713.4,745.1C705.4,741.1 694.3,736.4 686.3,730.5C678.3,724.6 671.4,717.7 665.5,709.7C659.6,701.7 653.9,690.6 650.9,682.6C647.9,674.6 647.7,668.3 647.7,661.7C647.7,655.1 649.2,647.7 650.9,642.9C652.6,638.1 655.2,635.8 658.0,633.0C660.8,630.2 665.9,627.5 667.5,626.4Z" transform="translate(0,6)" fill="url(#gWall)" stroke="url(#gWall)" stroke-width="1"/>
<path d="M667.5,626.4C667.2,625.0 663.8,621.8 665.5,618.0C667.2,614.2 673.1,608.1 678.0,603.4C682.9,598.7 689.1,594.2 695.0,590.0C700.9,585.8 706.9,582.2 713.4,578.4C719.9,574.6 727.1,570.5 734.0,567.0C740.9,563.5 748.0,560.2 755.0,557.5C762.0,554.8 769.0,552.9 776.0,551.0C783.0,549.1 789.8,547.4 796.8,546.0C803.8,544.6 811.0,543.4 818.0,542.5C825.0,541.6 832.0,540.6 838.5,540.9C845.0,541.1 852.6,542.1 857.3,544.0C862.0,545.9 865.1,550.9 866.7,552.3C868.9,551.8 872.5,548.6 880.0,549.0C887.5,549.4 901.0,551.2 911.5,554.4C922.0,557.6 934.1,562.6 942.8,568.0C951.5,573.4 958.2,580.1 963.7,586.7C969.2,593.3 972.9,600.7 976.0,607.6C979.1,614.5 981.0,622.2 982.4,628.4C983.8,634.6 984.5,640.1 984.5,645.0C984.5,649.9 984.1,653.0 982.4,657.5C980.7,662.0 977.2,668.6 974.1,672.1C971.0,675.6 965.4,677.4 963.7,678.4C964.1,679.8 967.2,682.5 965.8,686.7C964.4,690.9 960.9,696.5 955.3,703.4C949.7,710.3 941.4,721.1 932.4,728.4C923.4,735.7 913.3,741.6 901.1,747.2C888.9,752.8 873.3,758.3 859.4,761.8C845.5,765.3 829.5,767.4 817.7,768.1C805.9,768.8 796.1,767.0 788.5,766.0C780.9,765.0 776.0,763.7 771.8,761.8C767.6,759.9 764.9,755.7 763.5,754.5C761.4,755.0 755.9,757.6 751.0,757.6C746.1,757.6 740.6,756.6 734.3,754.5C728.0,752.4 721.4,749.1 713.4,745.1C705.4,741.1 694.3,736.4 686.3,730.5C678.3,724.6 671.4,717.7 665.5,709.7C659.6,701.7 653.9,690.6 650.9,682.6C647.9,674.6 647.7,668.3 647.7,661.7C647.7,655.1 649.2,647.7 650.9,642.9C652.6,638.1 655.2,635.8 658.0,633.0C660.8,630.2 665.9,627.5 667.5,626.4Z" transform="translate(0,4)" fill="url(#gWall)" stroke="url(#gWall)" stroke-width="1"/>
<path d="M667.5,626.4C667.2,625.0 663.8,621.8 665.5,618.0C667.2,614.2 673.1,608.1 678.0,603.4C682.9,598.7 689.1,594.2 695.0,590.0C700.9,585.8 706.9,582.2 713.4,578.4C719.9,574.6 727.1,570.5 734.0,567.0C740.9,563.5 748.0,560.2 755.0,557.5C762.0,554.8 769.0,552.9 776.0,551.0C783.0,549.1 789.8,547.4 796.8,546.0C803.8,544.6 811.0,543.4 818.0,542.5C825.0,541.6 832.0,540.6 838.5,540.9C845.0,541.1 852.6,542.1 857.3,544.0C862.0,545.9 865.1,550.9 866.7,552.3C868.9,551.8 872.5,548.6 880.0,549.0C887.5,549.4 901.0,551.2 911.5,554.4C922.0,557.6 934.1,562.6 942.8,568.0C951.5,573.4 958.2,580.1 963.7,586.7C969.2,593.3 972.9,600.7 976.0,607.6C979.1,614.5 981.0,622.2 982.4,628.4C983.8,634.6 984.5,640.1 984.5,645.0C984.5,649.9 984.1,653.0 982.4,657.5C980.7,662.0 977.2,668.6 974.1,672.1C971.0,675.6 965.4,677.4 963.7,678.4C964.1,679.8 967.2,682.5 965.8,686.7C964.4,690.9 960.9,696.5 955.3,703.4C949.7,710.3 941.4,721.1 932.4,728.4C923.4,735.7 913.3,741.6 901.1,747.2C888.9,752.8 873.3,758.3 859.4,761.8C845.5,765.3 829.5,767.4 817.7,768.1C805.9,768.8 796.1,767.0 788.5,766.0C780.9,765.0 776.0,763.7 771.8,761.8C767.6,759.9 764.9,755.7 763.5,754.5C761.4,755.0 755.9,757.6 751.0,757.6C746.1,757.6 740.6,756.6 734.3,754.5C728.0,752.4 721.4,749.1 713.4,745.1C705.4,741.1 694.3,736.4 686.3,730.5C678.3,724.6 671.4,717.7 665.5,709.7C659.6,701.7 653.9,690.6 650.9,682.6C647.9,674.6 647.7,668.3 647.7,661.7C647.7,655.1 649.2,647.7 650.9,642.9C652.6,638.1 655.2,635.8 658.0,633.0C660.8,630.2 665.9,627.5 667.5,626.4Z" transform="translate(0,2)" fill="url(#gWall)" stroke="url(#gWall)" stroke-width="1"/>
<path d="M883.4,521.7C884.8,517.2 889.2,510.4 893.4,506.7C897.6,502.9 902.8,500.7 908.4,499.2C914.0,497.7 920.9,496.9 926.7,497.5C932.5,498.1 936.5,499.9 943.4,502.5C950.3,505.1 960.0,509.1 968.4,513.4C976.8,517.7 986.5,524.2 993.5,528.4C1000.5,532.6 1005.3,535.3 1010.2,538.4C1015.1,541.5 1019.7,543.6 1022.7,546.7C1025.7,549.8 1027.5,553.1 1028.0,557.0C1028.5,560.9 1028.2,566.2 1026.0,570.0C1023.8,573.8 1019.6,577.8 1015.0,580.0C1010.4,582.2 1002.1,582.5 998.5,583.4C994.9,584.2 997.1,584.5 993.5,585.1C989.9,585.7 982.4,587.3 976.8,586.8C971.2,586.2 965.6,584.0 960.0,581.8C954.4,579.6 948.9,576.5 943.4,573.4C937.9,570.3 932.3,566.7 926.7,563.4C921.1,560.1 915.5,556.7 910.0,553.4C904.5,550.1 897.6,546.7 893.4,543.4C889.2,540.1 886.7,537.0 885.0,533.4C883.3,529.8 882.0,526.2 883.4,521.7Z" transform="translate(0,16)" fill="url(#gWall)" stroke="#15161c" stroke-width="1.20"/>
<path d="M883.4,521.7C884.8,517.2 889.2,510.4 893.4,506.7C897.6,502.9 902.8,500.7 908.4,499.2C914.0,497.7 920.9,496.9 926.7,497.5C932.5,498.1 936.5,499.9 943.4,502.5C950.3,505.1 960.0,509.1 968.4,513.4C976.8,517.7 986.5,524.2 993.5,528.4C1000.5,532.6 1005.3,535.3 1010.2,538.4C1015.1,541.5 1019.7,543.6 1022.7,546.7C1025.7,549.8 1027.5,553.1 1028.0,557.0C1028.5,560.9 1028.2,566.2 1026.0,570.0C1023.8,573.8 1019.6,577.8 1015.0,580.0C1010.4,582.2 1002.1,582.5 998.5,583.4C994.9,584.2 997.1,584.5 993.5,585.1C989.9,585.7 982.4,587.3 976.8,586.8C971.2,586.2 965.6,584.0 960.0,581.8C954.4,579.6 948.9,576.5 943.4,573.4C937.9,570.3 932.3,566.7 926.7,563.4C921.1,560.1 915.5,556.7 910.0,553.4C904.5,550.1 897.6,546.7 893.4,543.4C889.2,540.1 886.7,537.0 885.0,533.4C883.3,529.8 882.0,526.2 883.4,521.7Z" transform="translate(0,14)" fill="url(#gWall)" stroke="url(#gWall)" stroke-width="1"/>
<path d="M883.4,521.7C884.8,517.2 889.2,510.4 893.4,506.7C897.6,502.9 902.8,500.7 908.4,499.2C914.0,497.7 920.9,496.9 926.7,497.5C932.5,498.1 936.5,499.9 943.4,502.5C950.3,505.1 960.0,509.1 968.4,513.4C976.8,517.7 986.5,524.2 993.5,528.4C1000.5,532.6 1005.3,535.3 1010.2,538.4C1015.1,541.5 1019.7,543.6 1022.7,546.7C1025.7,549.8 1027.5,553.1 1028.0,557.0C1028.5,560.9 1028.2,566.2 1026.0,570.0C1023.8,573.8 1019.6,577.8 1015.0,580.0C1010.4,582.2 1002.1,582.5 998.5,583.4C994.9,584.2 997.1,584.5 993.5,585.1C989.9,585.7 982.4,587.3 976.8,586.8C971.2,586.2 965.6,584.0 960.0,581.8C954.4,579.6 948.9,576.5 943.4,573.4C937.9,570.3 932.3,566.7 926.7,563.4C921.1,560.1 915.5,556.7 910.0,553.4C904.5,550.1 897.6,546.7 893.4,543.4C889.2,540.1 886.7,537.0 885.0,533.4C883.3,529.8 882.0,526.2 883.4,521.7Z" transform="translate(0,12)" fill="url(#gWall)" stroke="url(#gWall)" stroke-width="1"/>
<path d="M883.4,521.7C884.8,517.2 889.2,510.4 893.4,506.7C897.6,502.9 902.8,500.7 908.4,499.2C914.0,497.7 920.9,496.9 926.7,497.5C932.5,498.1 936.5,499.9 943.4,502.5C950.3,505.1 960.0,509.1 968.4,513.4C976.8,517.7 986.5,524.2 993.5,528.4C1000.5,532.6 1005.3,535.3 1010.2,538.4C1015.1,541.5 1019.7,543.6 1022.7,546.7C1025.7,549.8 1027.5,553.1 1028.0,557.0C1028.5,560.9 1028.2,566.2 1026.0,570.0C1023.8,573.8 1019.6,577.8 1015.0,580.0C1010.4,582.2 1002.1,582.5 998.5,583.4C994.9,584.2 997.1,584.5 993.5,585.1C989.9,585.7 982.4,587.3 976.8,586.8C971.2,586.2 965.6,584.0 960.0,581.8C954.4,579.6 948.9,576.5 943.4,573.4C937.9,570.3 932.3,566.7 926.7,563.4C921.1,560.1 915.5,556.7 910.0,553.4C904.5,550.1 897.6,546.7 893.4,543.4C889.2,540.1 886.7,537.0 885.0,533.4C883.3,529.8 882.0,526.2 883.4,521.7Z" transform="translate(0,10)" fill="url(#gWall)" stroke="url(#gWall)" stroke-width="1"/>
<path d="M883.4,521.7C884.8,517.2 889.2,510.4 893.4,506.7C897.6,502.9 902.8,500.7 908.4,499.2C914.0,497.7 920.9,496.9 926.7,497.5C932.5,498.1 936.5,499.9 943.4,502.5C950.3,505.1 960.0,509.1 968.4,513.4C976.8,517.7 986.5,524.2 993.5,528.4C1000.5,532.6 1005.3,535.3 1010.2,538.4C1015.1,541.5 1019.7,543.6 1022.7,546.7C1025.7,549.8 1027.5,553.1 1028.0,557.0C1028.5,560.9 1028.2,566.2 1026.0,570.0C1023.8,573.8 1019.6,577.8 1015.0,580.0C1010.4,582.2 1002.1,582.5 998.5,583.4C994.9,584.2 997.1,584.5 993.5,585.1C989.9,585.7 982.4,587.3 976.8,586.8C971.2,586.2 965.6,584.0 960.0,581.8C954.4,579.6 948.9,576.5 943.4,573.4C937.9,570.3 932.3,566.7 926.7,563.4C921.1,560.1 915.5,556.7 910.0,553.4C904.5,550.1 897.6,546.7 893.4,543.4C889.2,540.1 886.7,537.0 885.0,533.4C883.3,529.8 882.0,526.2 883.4,521.7Z" transform="translate(0,8)" fill="url(#gWall)" stroke="url(#gWall)" stroke-width="1"/>
<path d="M883.4,521.7C884.8,517.2 889.2,510.4 893.4,506.7C897.6,502.9 902.8,500.7 908.4,499.2C914.0,497.7 920.9,496.9 926.7,497.5C932.5,498.1 936.5,499.9 943.4,502.5C950.3,505.1 960.0,509.1 968.4,513.4C976.8,517.7 986.5,524.2 993.5,528.4C1000.5,532.6 1005.3,535.3 1010.2,538.4C1015.1,541.5 1019.7,543.6 1022.7,546.7C1025.7,549.8 1027.5,553.1 1028.0,557.0C1028.5,560.9 1028.2,566.2 1026.0,570.0C1023.8,573.8 1019.6,577.8 1015.0,580.0C1010.4,582.2 1002.1,582.5 998.5,583.4C994.9,584.2 997.1,584.5 993.5,585.1C989.9,585.7 982.4,587.3 976.8,586.8C971.2,586.2 965.6,584.0 960.0,581.8C954.4,579.6 948.9,576.5 943.4,573.4C937.9,570.3 932.3,566.7 926.7,563.4C921.1,560.1 915.5,556.7 910.0,553.4C904.5,550.1 897.6,546.7 893.4,543.4C889.2,540.1 886.7,537.0 885.0,533.4C883.3,529.8 882.0,526.2 883.4,521.7Z" transform="translate(0,6)" fill="url(#gWall)" stroke="url(#gWall)" stroke-width="1"/>
<path d="M883.4,521.7C884.8,517.2 889.2,510.4 893.4,506.7C897.6,502.9 902.8,500.7 908.4,499.2C914.0,497.7 920.9,496.9 926.7,497.5C932.5,498.1 936.5,499.9 943.4,502.5C950.3,505.1 960.0,509.1 968.4,513.4C976.8,517.7 986.5,524.2 993.5,528.4C1000.5,532.6 1005.3,535.3 1010.2,538.4C1015.1,541.5 1019.7,543.6 1022.7,546.7C1025.7,549.8 1027.5,553.1 1028.0,557.0C1028.5,560.9 1028.2,566.2 1026.0,570.0C1023.8,573.8 1019.6,577.8 1015.0,580.0C1010.4,582.2 1002.1,582.5 998.5,583.4C994.9,584.2 997.1,584.5 993.5,585.1C989.9,585.7 982.4,587.3 976.8,586.8C971.2,586.2 965.6,584.0 960.0,581.8C954.4,579.6 948.9,576.5 943.4,573.4C937.9,570.3 932.3,566.7 926.7,563.4C921.1,560.1 915.5,556.7 910.0,553.4C904.5,550.1 897.6,546.7 893.4,543.4C889.2,540.1 886.7,537.0 885.0,533.4C883.3,529.8 882.0,526.2 883.4,521.7Z" transform="translate(0,4)" fill="url(#gWall)" stroke="url(#gWall)" stroke-width="1"/>
<path d="M883.4,521.7C884.8,517.2 889.2,510.4 893.4,506.7C897.6,502.9 902.8,500.7 908.4,499.2C914.0,497.7 920.9,496.9 926.7,497.5C932.5,498.1 936.5,499.9 943.4,502.5C950.3,505.1 960.0,509.1 968.4,513.4C976.8,517.7 986.5,524.2 993.5,528.4C1000.5,532.6 1005.3,535.3 1010.2,538.4C1015.1,541.5 1019.7,543.6 1022.7,546.7C1025.7,549.8 1027.5,553.1 1028.0,557.0C1028.5,560.9 1028.2,566.2 1026.0,570.0C1023.8,573.8 1019.6,577.8 1015.0,580.0C1010.4,582.2 1002.1,582.5 998.5,583.4C994.9,584.2 997.1,584.5 993.5,585.1C989.9,585.7 982.4,587.3 976.8,586.8C971.2,586.2 965.6,584.0 960.0,581.8C954.4,579.6 948.9,576.5 943.4,573.4C937.9,570.3 932.3,566.7 926.7,563.4C921.1,560.1 915.5,556.7 910.0,553.4C904.5,550.1 897.6,546.7 893.4,543.4C889.2,540.1 886.7,537.0 885.0,533.4C883.3,529.8 882.0,526.2 883.4,521.7Z" transform="translate(0,2)" fill="url(#gWall)" stroke="url(#gWall)" stroke-width="1"/>
<path d="M1018.5,525.0C1018.4,520.8 1018.2,517.6 1020.2,513.4C1022.2,509.2 1026.3,503.4 1030.2,500.0C1034.1,496.6 1038.5,494.6 1043.5,493.3C1048.5,492.1 1054.6,491.9 1060.2,492.5C1065.8,493.1 1071.3,494.6 1076.9,496.7C1082.5,498.8 1088.0,501.4 1093.6,505.0C1099.2,508.6 1104.8,513.1 1110.3,518.4C1115.8,523.7 1121.9,530.3 1126.9,536.7C1131.9,543.1 1137.0,550.6 1140.3,556.7C1143.6,562.8 1145.6,568.4 1147.0,573.4C1148.4,578.4 1149.2,582.3 1148.6,586.8C1148.0,591.2 1145.8,596.8 1143.6,600.1C1141.4,603.4 1139.5,605.1 1135.3,606.8C1131.1,608.5 1124.2,609.8 1118.6,610.1C1113.0,610.4 1107.5,609.6 1101.9,608.5C1096.3,607.4 1090.8,605.5 1085.2,603.5C1079.6,601.5 1073.2,599.0 1068.5,596.8C1063.8,594.6 1060.8,592.9 1056.9,590.1C1053.0,587.3 1048.8,584.2 1045.0,580.0C1041.2,575.8 1037.3,570.3 1034.0,565.0C1030.7,559.7 1027.2,552.4 1025.0,548.0C1022.8,543.6 1022.1,542.2 1021.0,538.4C1019.9,534.6 1018.6,529.2 1018.5,525.0Z" transform="translate(0,16)" fill="url(#gWall)" stroke="#15161c" stroke-width="1.20"/>
<path d="M1018.5,525.0C1018.4,520.8 1018.2,517.6 1020.2,513.4C1022.2,509.2 1026.3,503.4 1030.2,500.0C1034.1,496.6 1038.5,494.6 1043.5,493.3C1048.5,492.1 1054.6,491.9 1060.2,492.5C1065.8,493.1 1071.3,494.6 1076.9,496.7C1082.5,498.8 1088.0,501.4 1093.6,505.0C1099.2,508.6 1104.8,513.1 1110.3,518.4C1115.8,523.7 1121.9,530.3 1126.9,536.7C1131.9,543.1 1137.0,550.6 1140.3,556.7C1143.6,562.8 1145.6,568.4 1147.0,573.4C1148.4,578.4 1149.2,582.3 1148.6,586.8C1148.0,591.2 1145.8,596.8 1143.6,600.1C1141.4,603.4 1139.5,605.1 1135.3,606.8C1131.1,608.5 1124.2,609.8 1118.6,610.1C1113.0,610.4 1107.5,609.6 1101.9,608.5C1096.3,607.4 1090.8,605.5 1085.2,603.5C1079.6,601.5 1073.2,599.0 1068.5,596.8C1063.8,594.6 1060.8,592.9 1056.9,590.1C1053.0,587.3 1048.8,584.2 1045.0,580.0C1041.2,575.8 1037.3,570.3 1034.0,565.0C1030.7,559.7 1027.2,552.4 1025.0,548.0C1022.8,543.6 1022.1,542.2 1021.0,538.4C1019.9,534.6 1018.6,529.2 1018.5,525.0Z" transform="translate(0,14)" fill="url(#gWall)" stroke="url(#gWall)" stroke-width="1"/>
<path d="M1018.5,525.0C1018.4,520.8 1018.2,517.6 1020.2,513.4C1022.2,509.2 1026.3,503.4 1030.2,500.0C1034.1,496.6 1038.5,494.6 1043.5,493.3C1048.5,492.1 1054.6,491.9 1060.2,492.5C1065.8,493.1 1071.3,494.6 1076.9,496.7C1082.5,498.8 1088.0,501.4 1093.6,505.0C1099.2,508.6 1104.8,513.1 1110.3,518.4C1115.8,523.7 1121.9,530.3 1126.9,536.7C1131.9,543.1 1137.0,550.6 1140.3,556.7C1143.6,562.8 1145.6,568.4 1147.0,573.4C1148.4,578.4 1149.2,582.3 1148.6,586.8C1148.0,591.2 1145.8,596.8 1143.6,600.1C1141.4,603.4 1139.5,605.1 1135.3,606.8C1131.1,608.5 1124.2,609.8 1118.6,610.1C1113.0,610.4 1107.5,609.6 1101.9,608.5C1096.3,607.4 1090.8,605.5 1085.2,603.5C1079.6,601.5 1073.2,599.0 1068.5,596.8C1063.8,594.6 1060.8,592.9 1056.9,590.1C1053.0,587.3 1048.8,584.2 1045.0,580.0C1041.2,575.8 1037.3,570.3 1034.0,565.0C1030.7,559.7 1027.2,552.4 1025.0,548.0C1022.8,543.6 1022.1,542.2 1021.0,538.4C1019.9,534.6 1018.6,529.2 1018.5,525.0Z" transform="translate(0,12)" fill="url(#gWall)" stroke="url(#gWall)" stroke-width="1"/>
<path d="M1018.5,525.0C1018.4,520.8 1018.2,517.6 1020.2,513.4C1022.2,509.2 1026.3,503.4 1030.2,500.0C1034.1,496.6 1038.5,494.6 1043.5,493.3C1048.5,492.1 1054.6,491.9 1060.2,492.5C1065.8,493.1 1071.3,494.6 1076.9,496.7C1082.5,498.8 1088.0,501.4 1093.6,505.0C1099.2,508.6 1104.8,513.1 1110.3,518.4C1115.8,523.7 1121.9,530.3 1126.9,536.7C1131.9,543.1 1137.0,550.6 1140.3,556.7C1143.6,562.8 1145.6,568.4 1147.0,573.4C1148.4,578.4 1149.2,582.3 1148.6,586.8C1148.0,591.2 1145.8,596.8 1143.6,600.1C1141.4,603.4 1139.5,605.1 1135.3,606.8C1131.1,608.5 1124.2,609.8 1118.6,610.1C1113.0,610.4 1107.5,609.6 1101.9,608.5C1096.3,607.4 1090.8,605.5 1085.2,603.5C1079.6,601.5 1073.2,599.0 1068.5,596.8C1063.8,594.6 1060.8,592.9 1056.9,590.1C1053.0,587.3 1048.8,584.2 1045.0,580.0C1041.2,575.8 1037.3,570.3 1034.0,565.0C1030.7,559.7 1027.2,552.4 1025.0,548.0C1022.8,543.6 1022.1,542.2 1021.0,538.4C1019.9,534.6 1018.6,529.2 1018.5,525.0Z" transform="translate(0,10)" fill="url(#gWall)" stroke="url(#gWall)" stroke-width="1"/>
<path d="M1018.5,525.0C1018.4,520.8 1018.2,517.6 1020.2,513.4C1022.2,509.2 1026.3,503.4 1030.2,500.0C1034.1,496.6 1038.5,494.6 1043.5,493.3C1048.5,492.1 1054.6,491.9 1060.2,492.5C1065.8,493.1 1071.3,494.6 1076.9,496.7C1082.5,498.8 1088.0,501.4 1093.6,505.0C1099.2,508.6 1104.8,513.1 1110.3,518.4C1115.8,523.7 1121.9,530.3 1126.9,536.7C1131.9,543.1 1137.0,550.6 1140.3,556.7C1143.6,562.8 1145.6,568.4 1147.0,573.4C1148.4,578.4 1149.2,582.3 1148.6,586.8C1148.0,591.2 1145.8,596.8 1143.6,600.1C1141.4,603.4 1139.5,605.1 1135.3,606.8C1131.1,608.5 1124.2,609.8 1118.6,610.1C1113.0,610.4 1107.5,609.6 1101.9,608.5C1096.3,607.4 1090.8,605.5 1085.2,603.5C1079.6,601.5 1073.2,599.0 1068.5,596.8C1063.8,594.6 1060.8,592.9 1056.9,590.1C1053.0,587.3 1048.8,584.2 1045.0,580.0C1041.2,575.8 1037.3,570.3 1034.0,565.0C1030.7,559.7 1027.2,552.4 1025.0,548.0C1022.8,543.6 1022.1,542.2 1021.0,538.4C1019.9,534.6 1018.6,529.2 1018.5,525.0Z" transform="translate(0,8)" fill="url(#gWall)" stroke="url(#gWall)" stroke-width="1"/>
<path d="M1018.5,525.0C1018.4,520.8 1018.2,517.6 1020.2,513.4C1022.2,509.2 1026.3,503.4 1030.2,500.0C1034.1,496.6 1038.5,494.6 1043.5,493.3C1048.5,492.1 1054.6,491.9 1060.2,492.5C1065.8,493.1 1071.3,494.6 1076.9,496.7C1082.5,498.8 1088.0,501.4 1093.6,505.0C1099.2,508.6 1104.8,513.1 1110.3,518.4C1115.8,523.7 1121.9,530.3 1126.9,536.7C1131.9,543.1 1137.0,550.6 1140.3,556.7C1143.6,562.8 1145.6,568.4 1147.0,573.4C1148.4,578.4 1149.2,582.3 1148.6,586.8C1148.0,591.2 1145.8,596.8 1143.6,600.1C1141.4,603.4 1139.5,605.1 1135.3,606.8C1131.1,608.5 1124.2,609.8 1118.6,610.1C1113.0,610.4 1107.5,609.6 1101.9,608.5C1096.3,607.4 1090.8,605.5 1085.2,603.5C1079.6,601.5 1073.2,599.0 1068.5,596.8C1063.8,594.6 1060.8,592.9 1056.9,590.1C1053.0,587.3 1048.8,584.2 1045.0,580.0C1041.2,575.8 1037.3,570.3 1034.0,565.0C1030.7,559.7 1027.2,552.4 1025.0,548.0C1022.8,543.6 1022.1,542.2 1021.0,538.4C1019.9,534.6 1018.6,529.2 1018.5,525.0Z" transform="translate(0,6)" fill="url(#gWall)" stroke="url(#gWall)" stroke-width="1"/>
<path d="M1018.5,525.0C1018.4,520.8 1018.2,517.6 1020.2,513.4C1022.2,509.2 1026.3,503.4 1030.2,500.0C1034.1,496.6 1038.5,494.6 1043.5,493.3C1048.5,492.1 1054.6,491.9 1060.2,492.5C1065.8,493.1 1071.3,494.6 1076.9,496.7C1082.5,498.8 1088.0,501.4 1093.6,505.0C1099.2,508.6 1104.8,513.1 1110.3,518.4C1115.8,523.7 1121.9,530.3 1126.9,536.7C1131.9,543.1 1137.0,550.6 1140.3,556.7C1143.6,562.8 1145.6,568.4 1147.0,573.4C1148.4,578.4 1149.2,582.3 1148.6,586.8C1148.0,591.2 1145.8,596.8 1143.6,600.1C1141.4,603.4 1139.5,605.1 1135.3,606.8C1131.1,608.5 1124.2,609.8 1118.6,610.1C1113.0,610.4 1107.5,609.6 1101.9,608.5C1096.3,607.4 1090.8,605.5 1085.2,603.5C1079.6,601.5 1073.2,599.0 1068.5,596.8C1063.8,594.6 1060.8,592.9 1056.9,590.1C1053.0,587.3 1048.8,584.2 1045.0,580.0C1041.2,575.8 1037.3,570.3 1034.0,565.0C1030.7,559.7 1027.2,552.4 1025.0,548.0C1022.8,543.6 1022.1,542.2 1021.0,538.4C1019.9,534.6 1018.6,529.2 1018.5,525.0Z" transform="translate(0,4)" fill="url(#gWall)" stroke="url(#gWall)" stroke-width="1"/>
<path d="M1018.5,525.0C1018.4,520.8 1018.2,517.6 1020.2,513.4C1022.2,509.2 1026.3,503.4 1030.2,500.0C1034.1,496.6 1038.5,494.6 1043.5,493.3C1048.5,492.1 1054.6,491.9 1060.2,492.5C1065.8,493.1 1071.3,494.6 1076.9,496.7C1082.5,498.8 1088.0,501.4 1093.6,505.0C1099.2,508.6 1104.8,513.1 1110.3,518.4C1115.8,523.7 1121.9,530.3 1126.9,536.7C1131.9,543.1 1137.0,550.6 1140.3,556.7C1143.6,562.8 1145.6,568.4 1147.0,573.4C1148.4,578.4 1149.2,582.3 1148.6,586.8C1148.0,591.2 1145.8,596.8 1143.6,600.1C1141.4,603.4 1139.5,605.1 1135.3,606.8C1131.1,608.5 1124.2,609.8 1118.6,610.1C1113.0,610.4 1107.5,609.6 1101.9,608.5C1096.3,607.4 1090.8,605.5 1085.2,603.5C1079.6,601.5 1073.2,599.0 1068.5,596.8C1063.8,594.6 1060.8,592.9 1056.9,590.1C1053.0,587.3 1048.8,584.2 1045.0,580.0C1041.2,575.8 1037.3,570.3 1034.0,565.0C1030.7,559.7 1027.2,552.4 1025.0,548.0C1022.8,543.6 1022.1,542.2 1021.0,538.4C1019.9,534.6 1018.6,529.2 1018.5,525.0Z" transform="translate(0,2)" fill="url(#gWall)" stroke="url(#gWall)" stroke-width="1"/>
<path d="M984.2,606.7C983.5,603.4 982.4,603.6 984.2,600.0C986.0,596.4 990.7,588.7 995.0,585.0C999.3,581.3 1004.2,579.3 1010.0,578.0C1015.8,576.7 1024.2,576.5 1030.0,577.0C1035.8,577.5 1040.8,579.0 1045.0,581.0C1049.2,583.0 1052.4,585.5 1055.2,589.2C1058.0,592.9 1059.9,598.2 1061.8,603.4C1063.7,608.5 1065.7,614.5 1066.8,620.1C1067.9,625.7 1068.2,631.8 1068.5,636.8C1068.8,641.8 1069.2,645.4 1068.5,650.1C1067.8,654.8 1066.2,660.9 1064.3,665.1C1062.3,669.3 1060.3,672.0 1056.8,675.1C1053.3,678.2 1048.5,681.5 1043.5,683.5C1038.5,685.5 1032.4,686.8 1026.8,686.8C1021.2,686.8 1015.1,685.2 1010.1,683.5C1005.1,681.8 1000.1,679.3 996.7,676.8C993.4,674.3 991.4,672.4 990.0,668.5C988.6,664.6 988.4,658.7 988.4,653.4C988.4,648.1 990.0,642.3 990.0,636.8C990.0,631.2 989.4,625.1 988.4,620.1C987.4,615.1 984.9,610.1 984.2,606.7Z" transform="translate(0,16)" fill="url(#gWall)" stroke="#15161c" stroke-width="1.20"/>
<path d="M984.2,606.7C983.5,603.4 982.4,603.6 984.2,600.0C986.0,596.4 990.7,588.7 995.0,585.0C999.3,581.3 1004.2,579.3 1010.0,578.0C1015.8,576.7 1024.2,576.5 1030.0,577.0C1035.8,577.5 1040.8,579.0 1045.0,581.0C1049.2,583.0 1052.4,585.5 1055.2,589.2C1058.0,592.9 1059.9,598.2 1061.8,603.4C1063.7,608.5 1065.7,614.5 1066.8,620.1C1067.9,625.7 1068.2,631.8 1068.5,636.8C1068.8,641.8 1069.2,645.4 1068.5,650.1C1067.8,654.8 1066.2,660.9 1064.3,665.1C1062.3,669.3 1060.3,672.0 1056.8,675.1C1053.3,678.2 1048.5,681.5 1043.5,683.5C1038.5,685.5 1032.4,686.8 1026.8,686.8C1021.2,686.8 1015.1,685.2 1010.1,683.5C1005.1,681.8 1000.1,679.3 996.7,676.8C993.4,674.3 991.4,672.4 990.0,668.5C988.6,664.6 988.4,658.7 988.4,653.4C988.4,648.1 990.0,642.3 990.0,636.8C990.0,631.2 989.4,625.1 988.4,620.1C987.4,615.1 984.9,610.1 984.2,606.7Z" transform="translate(0,14)" fill="url(#gWall)" stroke="url(#gWall)" stroke-width="1"/>
<path d="M984.2,606.7C983.5,603.4 982.4,603.6 984.2,600.0C986.0,596.4 990.7,588.7 995.0,585.0C999.3,581.3 1004.2,579.3 1010.0,578.0C1015.8,576.7 1024.2,576.5 1030.0,577.0C1035.8,577.5 1040.8,579.0 1045.0,581.0C1049.2,583.0 1052.4,585.5 1055.2,589.2C1058.0,592.9 1059.9,598.2 1061.8,603.4C1063.7,608.5 1065.7,614.5 1066.8,620.1C1067.9,625.7 1068.2,631.8 1068.5,636.8C1068.8,641.8 1069.2,645.4 1068.5,650.1C1067.8,654.8 1066.2,660.9 1064.3,665.1C1062.3,669.3 1060.3,672.0 1056.8,675.1C1053.3,678.2 1048.5,681.5 1043.5,683.5C1038.5,685.5 1032.4,686.8 1026.8,686.8C1021.2,686.8 1015.1,685.2 1010.1,683.5C1005.1,681.8 1000.1,679.3 996.7,676.8C993.4,674.3 991.4,672.4 990.0,668.5C988.6,664.6 988.4,658.7 988.4,653.4C988.4,648.1 990.0,642.3 990.0,636.8C990.0,631.2 989.4,625.1 988.4,620.1C987.4,615.1 984.9,610.1 984.2,606.7Z" transform="translate(0,12)" fill="url(#gWall)" stroke="url(#gWall)" stroke-width="1"/>
<path d="M984.2,606.7C983.5,603.4 982.4,603.6 984.2,600.0C986.0,596.4 990.7,588.7 995.0,585.0C999.3,581.3 1004.2,579.3 1010.0,578.0C1015.8,576.7 1024.2,576.5 1030.0,577.0C1035.8,577.5 1040.8,579.0 1045.0,581.0C1049.2,583.0 1052.4,585.5 1055.2,589.2C1058.0,592.9 1059.9,598.2 1061.8,603.4C1063.7,608.5 1065.7,614.5 1066.8,620.1C1067.9,625.7 1068.2,631.8 1068.5,636.8C1068.8,641.8 1069.2,645.4 1068.5,650.1C1067.8,654.8 1066.2,660.9 1064.3,665.1C1062.3,669.3 1060.3,672.0 1056.8,675.1C1053.3,678.2 1048.5,681.5 1043.5,683.5C1038.5,685.5 1032.4,686.8 1026.8,686.8C1021.2,686.8 1015.1,685.2 1010.1,683.5C1005.1,681.8 1000.1,679.3 996.7,676.8C993.4,674.3 991.4,672.4 990.0,668.5C988.6,664.6 988.4,658.7 988.4,653.4C988.4,648.1 990.0,642.3 990.0,636.8C990.0,631.2 989.4,625.1 988.4,620.1C987.4,615.1 984.9,610.1 984.2,606.7Z" transform="translate(0,10)" fill="url(#gWall)" stroke="url(#gWall)" stroke-width="1"/>
<path d="M984.2,606.7C983.5,603.4 982.4,603.6 984.2,600.0C986.0,596.4 990.7,588.7 995.0,585.0C999.3,581.3 1004.2,579.3 1010.0,578.0C1015.8,576.7 1024.2,576.5 1030.0,577.0C1035.8,577.5 1040.8,579.0 1045.0,581.0C1049.2,583.0 1052.4,585.5 1055.2,589.2C1058.0,592.9 1059.9,598.2 1061.8,603.4C1063.7,608.5 1065.7,614.5 1066.8,620.1C1067.9,625.7 1068.2,631.8 1068.5,636.8C1068.8,641.8 1069.2,645.4 1068.5,650.1C1067.8,654.8 1066.2,660.9 1064.3,665.1C1062.3,669.3 1060.3,672.0 1056.8,675.1C1053.3,678.2 1048.5,681.5 1043.5,683.5C1038.5,685.5 1032.4,686.8 1026.8,686.8C1021.2,686.8 1015.1,685.2 1010.1,683.5C1005.1,681.8 1000.1,679.3 996.7,676.8C993.4,674.3 991.4,672.4 990.0,668.5C988.6,664.6 988.4,658.7 988.4,653.4C988.4,648.1 990.0,642.3 990.0,636.8C990.0,631.2 989.4,625.1 988.4,620.1C987.4,615.1 984.9,610.1 984.2,606.7Z" transform="translate(0,8)" fill="url(#gWall)" stroke="url(#gWall)" stroke-width="1"/>
<path d="M984.2,606.7C983.5,603.4 982.4,603.6 984.2,600.0C986.0,596.4 990.7,588.7 995.0,585.0C999.3,581.3 1004.2,579.3 1010.0,578.0C1015.8,576.7 1024.2,576.5 1030.0,577.0C1035.8,577.5 1040.8,579.0 1045.0,581.0C1049.2,583.0 1052.4,585.5 1055.2,589.2C1058.0,592.9 1059.9,598.2 1061.8,603.4C1063.7,608.5 1065.7,614.5 1066.8,620.1C1067.9,625.7 1068.2,631.8 1068.5,636.8C1068.8,641.8 1069.2,645.4 1068.5,650.1C1067.8,654.8 1066.2,660.9 1064.3,665.1C1062.3,669.3 1060.3,672.0 1056.8,675.1C1053.3,678.2 1048.5,681.5 1043.5,683.5C1038.5,685.5 1032.4,686.8 1026.8,686.8C1021.2,686.8 1015.1,685.2 1010.1,683.5C1005.1,681.8 1000.1,679.3 996.7,676.8C993.4,674.3 991.4,672.4 990.0,668.5C988.6,664.6 988.4,658.7 988.4,653.4C988.4,648.1 990.0,642.3 990.0,636.8C990.0,631.2 989.4,625.1 988.4,620.1C987.4,615.1 984.9,610.1 984.2,606.7Z" transform="translate(0,6)" fill="url(#gWall)" stroke="url(#gWall)" stroke-width="1"/>
<path d="M984.2,606.7C983.5,603.4 982.4,603.6 984.2,600.0C986.0,596.4 990.7,588.7 995.0,585.0C999.3,581.3 1004.2,579.3 1010.0,578.0C1015.8,576.7 1024.2,576.5 1030.0,577.0C1035.8,577.5 1040.8,579.0 1045.0,581.0C1049.2,583.0 1052.4,585.5 1055.2,589.2C1058.0,592.9 1059.9,598.2 1061.8,603.4C1063.7,608.5 1065.7,614.5 1066.8,620.1C1067.9,625.7 1068.2,631.8 1068.5,636.8C1068.8,641.8 1069.2,645.4 1068.5,650.1C1067.8,654.8 1066.2,660.9 1064.3,665.1C1062.3,669.3 1060.3,672.0 1056.8,675.1C1053.3,678.2 1048.5,681.5 1043.5,683.5C1038.5,685.5 1032.4,686.8 1026.8,686.8C1021.2,686.8 1015.1,685.2 1010.1,683.5C1005.1,681.8 1000.1,679.3 996.7,676.8C993.4,674.3 991.4,672.4 990.0,668.5C988.6,664.6 988.4,658.7 988.4,653.4C988.4,648.1 990.0,642.3 990.0,636.8C990.0,631.2 989.4,625.1 988.4,620.1C987.4,615.1 984.9,610.1 984.2,606.7Z" transform="translate(0,4)" fill="url(#gWall)" stroke="url(#gWall)" stroke-width="1"/>
<path d="M984.2,606.7C983.5,603.4 982.4,603.6 984.2,600.0C986.0,596.4 990.7,588.7 995.0,585.0C999.3,581.3 1004.2,579.3 1010.0,578.0C1015.8,576.7 1024.2,576.5 1030.0,577.0C1035.8,577.5 1040.8,579.0 1045.0,581.0C1049.2,583.0 1052.4,585.5 1055.2,589.2C1058.0,592.9 1059.9,598.2 1061.8,603.4C1063.7,608.5 1065.7,614.5 1066.8,620.1C1067.9,625.7 1068.2,631.8 1068.5,636.8C1068.8,641.8 1069.2,645.4 1068.5,650.1C1067.8,654.8 1066.2,660.9 1064.3,665.1C1062.3,669.3 1060.3,672.0 1056.8,675.1C1053.3,678.2 1048.5,681.5 1043.5,683.5C1038.5,685.5 1032.4,686.8 1026.8,686.8C1021.2,686.8 1015.1,685.2 1010.1,683.5C1005.1,681.8 1000.1,679.3 996.7,676.8C993.4,674.3 991.4,672.4 990.0,668.5C988.6,664.6 988.4,658.7 988.4,653.4C988.4,648.1 990.0,642.3 990.0,636.8C990.0,631.2 989.4,625.1 988.4,620.1C987.4,615.1 984.9,610.1 984.2,606.7Z" transform="translate(0,2)" fill="url(#gWall)" stroke="url(#gWall)" stroke-width="1"/>
<path d="M1131.7,516.7C1132.4,512.8 1133.4,506.4 1136.7,501.7C1140.0,497.0 1145.9,491.9 1151.7,488.4C1157.5,484.9 1164.8,482.3 1171.7,480.9C1178.7,479.5 1186.5,479.3 1193.4,480.0C1200.4,480.7 1207.6,482.5 1213.4,485.0C1219.2,487.5 1224.7,491.1 1228.5,495.0C1232.3,498.9 1234.6,504.5 1236.0,508.4C1237.4,512.3 1237.8,515.1 1236.8,518.4C1235.8,521.7 1233.4,525.1 1230.1,528.4C1226.8,531.7 1222.3,535.5 1216.8,538.4C1211.2,541.3 1203.5,544.4 1196.8,545.9C1190.1,547.4 1183.4,548.0 1176.7,547.6C1170.0,547.2 1162.8,545.5 1156.7,543.4C1150.6,541.3 1144.0,538.1 1140.0,535.1C1136.0,532.1 1133.9,528.2 1132.5,525.1C1131.1,522.0 1131.0,520.6 1131.7,516.7Z" transform="translate(0,16)" fill="url(#gWall)" stroke="#15161c" stroke-width="1.20"/>
<path d="M1131.7,516.7C1132.4,512.8 1133.4,506.4 1136.7,501.7C1140.0,497.0 1145.9,491.9 1151.7,488.4C1157.5,484.9 1164.8,482.3 1171.7,480.9C1178.7,479.5 1186.5,479.3 1193.4,480.0C1200.4,480.7 1207.6,482.5 1213.4,485.0C1219.2,487.5 1224.7,491.1 1228.5,495.0C1232.3,498.9 1234.6,504.5 1236.0,508.4C1237.4,512.3 1237.8,515.1 1236.8,518.4C1235.8,521.7 1233.4,525.1 1230.1,528.4C1226.8,531.7 1222.3,535.5 1216.8,538.4C1211.2,541.3 1203.5,544.4 1196.8,545.9C1190.1,547.4 1183.4,548.0 1176.7,547.6C1170.0,547.2 1162.8,545.5 1156.7,543.4C1150.6,541.3 1144.0,538.1 1140.0,535.1C1136.0,532.1 1133.9,528.2 1132.5,525.1C1131.1,522.0 1131.0,520.6 1131.7,516.7Z" transform="translate(0,14)" fill="url(#gWall)" stroke="url(#gWall)" stroke-width="1"/>
<path d="M1131.7,516.7C1132.4,512.8 1133.4,506.4 1136.7,501.7C1140.0,497.0 1145.9,491.9 1151.7,488.4C1157.5,484.9 1164.8,482.3 1171.7,480.9C1178.7,479.5 1186.5,479.3 1193.4,480.0C1200.4,480.7 1207.6,482.5 1213.4,485.0C1219.2,487.5 1224.7,491.1 1228.5,495.0C1232.3,498.9 1234.6,504.5 1236.0,508.4C1237.4,512.3 1237.8,515.1 1236.8,518.4C1235.8,521.7 1233.4,525.1 1230.1,528.4C1226.8,531.7 1222.3,535.5 1216.8,538.4C1211.2,541.3 1203.5,544.4 1196.8,545.9C1190.1,547.4 1183.4,548.0 1176.7,547.6C1170.0,547.2 1162.8,545.5 1156.7,543.4C1150.6,541.3 1144.0,538.1 1140.0,535.1C1136.0,532.1 1133.9,528.2 1132.5,525.1C1131.1,522.0 1131.0,520.6 1131.7,516.7Z" transform="translate(0,12)" fill="url(#gWall)" stroke="url(#gWall)" stroke-width="1"/>
<path d="M1131.7,516.7C1132.4,512.8 1133.4,506.4 1136.7,501.7C1140.0,497.0 1145.9,491.9 1151.7,488.4C1157.5,484.9 1164.8,482.3 1171.7,480.9C1178.7,479.5 1186.5,479.3 1193.4,480.0C1200.4,480.7 1207.6,482.5 1213.4,485.0C1219.2,487.5 1224.7,491.1 1228.5,495.0C1232.3,498.9 1234.6,504.5 1236.0,508.4C1237.4,512.3 1237.8,515.1 1236.8,518.4C1235.8,521.7 1233.4,525.1 1230.1,528.4C1226.8,531.7 1222.3,535.5 1216.8,538.4C1211.2,541.3 1203.5,544.4 1196.8,545.9C1190.1,547.4 1183.4,548.0 1176.7,547.6C1170.0,547.2 1162.8,545.5 1156.7,543.4C1150.6,541.3 1144.0,538.1 1140.0,535.1C1136.0,532.1 1133.9,528.2 1132.5,525.1C1131.1,522.0 1131.0,520.6 1131.7,516.7Z" transform="translate(0,10)" fill="url(#gWall)" stroke="url(#gWall)" stroke-width="1"/>
<path d="M1131.7,516.7C1132.4,512.8 1133.4,506.4 1136.7,501.7C1140.0,497.0 1145.9,491.9 1151.7,488.4C1157.5,484.9 1164.8,482.3 1171.7,480.9C1178.7,479.5 1186.5,479.3 1193.4,480.0C1200.4,480.7 1207.6,482.5 1213.4,485.0C1219.2,487.5 1224.7,491.1 1228.5,495.0C1232.3,498.9 1234.6,504.5 1236.0,508.4C1237.4,512.3 1237.8,515.1 1236.8,518.4C1235.8,521.7 1233.4,525.1 1230.1,528.4C1226.8,531.7 1222.3,535.5 1216.8,538.4C1211.2,541.3 1203.5,544.4 1196.8,545.9C1190.1,547.4 1183.4,548.0 1176.7,547.6C1170.0,547.2 1162.8,545.5 1156.7,543.4C1150.6,541.3 1144.0,538.1 1140.0,535.1C1136.0,532.1 1133.9,528.2 1132.5,525.1C1131.1,522.0 1131.0,520.6 1131.7,516.7Z" transform="translate(0,8)" fill="url(#gWall)" stroke="url(#gWall)" stroke-width="1"/>
<path d="M1131.7,516.7C1132.4,512.8 1133.4,506.4 1136.7,501.7C1140.0,497.0 1145.9,491.9 1151.7,488.4C1157.5,484.9 1164.8,482.3 1171.7,480.9C1178.7,479.5 1186.5,479.3 1193.4,480.0C1200.4,480.7 1207.6,482.5 1213.4,485.0C1219.2,487.5 1224.7,491.1 1228.5,495.0C1232.3,498.9 1234.6,504.5 1236.0,508.4C1237.4,512.3 1237.8,515.1 1236.8,518.4C1235.8,521.7 1233.4,525.1 1230.1,528.4C1226.8,531.7 1222.3,535.5 1216.8,538.4C1211.2,541.3 1203.5,544.4 1196.8,545.9C1190.1,547.4 1183.4,548.0 1176.7,547.6C1170.0,547.2 1162.8,545.5 1156.7,543.4C1150.6,541.3 1144.0,538.1 1140.0,535.1C1136.0,532.1 1133.9,528.2 1132.5,525.1C1131.1,522.0 1131.0,520.6 1131.7,516.7Z" transform="translate(0,6)" fill="url(#gWall)" stroke="url(#gWall)" stroke-width="1"/>
<path d="M1131.7,516.7C1132.4,512.8 1133.4,506.4 1136.7,501.7C1140.0,497.0 1145.9,491.9 1151.7,488.4C1157.5,484.9 1164.8,482.3 1171.7,480.9C1178.7,479.5 1186.5,479.3 1193.4,480.0C1200.4,480.7 1207.6,482.5 1213.4,485.0C1219.2,487.5 1224.7,491.1 1228.5,495.0C1232.3,498.9 1234.6,504.5 1236.0,508.4C1237.4,512.3 1237.8,515.1 1236.8,518.4C1235.8,521.7 1233.4,525.1 1230.1,528.4C1226.8,531.7 1222.3,535.5 1216.8,538.4C1211.2,541.3 1203.5,544.4 1196.8,545.9C1190.1,547.4 1183.4,548.0 1176.7,547.6C1170.0,547.2 1162.8,545.5 1156.7,543.4C1150.6,541.3 1144.0,538.1 1140.0,535.1C1136.0,532.1 1133.9,528.2 1132.5,525.1C1131.1,522.0 1131.0,520.6 1131.7,516.7Z" transform="translate(0,4)" fill="url(#gWall)" stroke="url(#gWall)" stroke-width="1"/>
<path d="M1131.7,516.7C1132.4,512.8 1133.4,506.4 1136.7,501.7C1140.0,497.0 1145.9,491.9 1151.7,488.4C1157.5,484.9 1164.8,482.3 1171.7,480.9C1178.7,479.5 1186.5,479.3 1193.4,480.0C1200.4,480.7 1207.6,482.5 1213.4,485.0C1219.2,487.5 1224.7,491.1 1228.5,495.0C1232.3,498.9 1234.6,504.5 1236.0,508.4C1237.4,512.3 1237.8,515.1 1236.8,518.4C1235.8,521.7 1233.4,525.1 1230.1,528.4C1226.8,531.7 1222.3,535.5 1216.8,538.4C1211.2,541.3 1203.5,544.4 1196.8,545.9C1190.1,547.4 1183.4,548.0 1176.7,547.6C1170.0,547.2 1162.8,545.5 1156.7,543.4C1150.6,541.3 1144.0,538.1 1140.0,535.1C1136.0,532.1 1133.9,528.2 1132.5,525.1C1131.1,522.0 1131.0,520.6 1131.7,516.7Z" transform="translate(0,2)" fill="url(#gWall)" stroke="url(#gWall)" stroke-width="1"/>
<path d="M667.5,626.4C667.2,625.0 663.8,621.8 665.5,618.0C667.2,614.2 673.1,608.1 678.0,603.4C682.9,598.7 689.1,594.2 695.0,590.0C700.9,585.8 706.9,582.2 713.4,578.4C719.9,574.6 727.1,570.5 734.0,567.0C740.9,563.5 748.0,560.2 755.0,557.5C762.0,554.8 769.0,552.9 776.0,551.0C783.0,549.1 789.8,547.4 796.8,546.0C803.8,544.6 811.0,543.4 818.0,542.5C825.0,541.6 832.0,540.6 838.5,540.9C845.0,541.1 852.6,542.1 857.3,544.0C862.0,545.9 865.1,550.9 866.7,552.3C868.9,551.8 872.5,548.6 880.0,549.0C887.5,549.4 901.0,551.2 911.5,554.4C922.0,557.6 934.1,562.6 942.8,568.0C951.5,573.4 958.2,580.1 963.7,586.7C969.2,593.3 972.9,600.7 976.0,607.6C979.1,614.5 981.0,622.2 982.4,628.4C983.8,634.6 984.5,640.1 984.5,645.0C984.5,649.9 984.1,653.0 982.4,657.5C980.7,662.0 977.2,668.6 974.1,672.1C971.0,675.6 965.4,677.4 963.7,678.4C964.1,679.8 967.2,682.5 965.8,686.7C964.4,690.9 960.9,696.5 955.3,703.4C949.7,710.3 941.4,721.1 932.4,728.4C923.4,735.7 913.3,741.6 901.1,747.2C888.9,752.8 873.3,758.3 859.4,761.8C845.5,765.3 829.5,767.4 817.7,768.1C805.9,768.8 796.1,767.0 788.5,766.0C780.9,765.0 776.0,763.7 771.8,761.8C767.6,759.9 764.9,755.7 763.5,754.5C761.4,755.0 755.9,757.6 751.0,757.6C746.1,757.6 740.6,756.6 734.3,754.5C728.0,752.4 721.4,749.1 713.4,745.1C705.4,741.1 694.3,736.4 686.3,730.5C678.3,724.6 671.4,717.7 665.5,709.7C659.6,701.7 653.9,690.6 650.9,682.6C647.9,674.6 647.7,668.3 647.7,661.7C647.7,655.1 649.2,647.7 650.9,642.9C652.6,638.1 655.2,635.8 658.0,633.0C660.8,630.2 665.9,627.5 667.5,626.4Z" fill="#9ea3c0" stroke="#15161c" stroke-width="1.92"/>
<path d="M883.4,521.7C884.8,517.2 889.2,510.4 893.4,506.7C897.6,502.9 902.8,500.7 908.4,499.2C914.0,497.7 920.9,496.9 926.7,497.5C932.5,498.1 936.5,499.9 943.4,502.5C950.3,505.1 960.0,509.1 968.4,513.4C976.8,517.7 986.5,524.2 993.5,528.4C1000.5,532.6 1005.3,535.3 1010.2,538.4C1015.1,541.5 1019.7,543.6 1022.7,546.7C1025.7,549.8 1027.5,553.1 1028.0,557.0C1028.5,560.9 1028.2,566.2 1026.0,570.0C1023.8,573.8 1019.6,577.8 1015.0,580.0C1010.4,582.2 1002.1,582.5 998.5,583.4C994.9,584.2 997.1,584.5 993.5,585.1C989.9,585.7 982.4,587.3 976.8,586.8C971.2,586.2 965.6,584.0 960.0,581.8C954.4,579.6 948.9,576.5 943.4,573.4C937.9,570.3 932.3,566.7 926.7,563.4C921.1,560.1 915.5,556.7 910.0,553.4C904.5,550.1 897.6,546.7 893.4,543.4C889.2,540.1 886.7,537.0 885.0,533.4C883.3,529.8 882.0,526.2 883.4,521.7Z" fill="#9ea3c0" stroke="#15161c" stroke-width="1.92"/>
<path d="M1018.5,525.0C1018.4,520.8 1018.2,517.6 1020.2,513.4C1022.2,509.2 1026.3,503.4 1030.2,500.0C1034.1,496.6 1038.5,494.6 1043.5,493.3C1048.5,492.1 1054.6,491.9 1060.2,492.5C1065.8,493.1 1071.3,494.6 1076.9,496.7C1082.5,498.8 1088.0,501.4 1093.6,505.0C1099.2,508.6 1104.8,513.1 1110.3,518.4C1115.8,523.7 1121.9,530.3 1126.9,536.7C1131.9,543.1 1137.0,550.6 1140.3,556.7C1143.6,562.8 1145.6,568.4 1147.0,573.4C1148.4,578.4 1149.2,582.3 1148.6,586.8C1148.0,591.2 1145.8,596.8 1143.6,600.1C1141.4,603.4 1139.5,605.1 1135.3,606.8C1131.1,608.5 1124.2,609.8 1118.6,610.1C1113.0,610.4 1107.5,609.6 1101.9,608.5C1096.3,607.4 1090.8,605.5 1085.2,603.5C1079.6,601.5 1073.2,599.0 1068.5,596.8C1063.8,594.6 1060.8,592.9 1056.9,590.1C1053.0,587.3 1048.8,584.2 1045.0,580.0C1041.2,575.8 1037.3,570.3 1034.0,565.0C1030.7,559.7 1027.2,552.4 1025.0,548.0C1022.8,543.6 1022.1,542.2 1021.0,538.4C1019.9,534.6 1018.6,529.2 1018.5,525.0Z" fill="#9ea3c0" stroke="#15161c" stroke-width="1.92"/>
<path d="M984.2,606.7C983.5,603.4 982.4,603.6 984.2,600.0C986.0,596.4 990.7,588.7 995.0,585.0C999.3,581.3 1004.2,579.3 1010.0,578.0C1015.8,576.7 1024.2,576.5 1030.0,577.0C1035.8,577.5 1040.8,579.0 1045.0,581.0C1049.2,583.0 1052.4,585.5 1055.2,589.2C1058.0,592.9 1059.9,598.2 1061.8,603.4C1063.7,608.5 1065.7,614.5 1066.8,620.1C1067.9,625.7 1068.2,631.8 1068.5,636.8C1068.8,641.8 1069.2,645.4 1068.5,650.1C1067.8,654.8 1066.2,660.9 1064.3,665.1C1062.3,669.3 1060.3,672.0 1056.8,675.1C1053.3,678.2 1048.5,681.5 1043.5,683.5C1038.5,685.5 1032.4,686.8 1026.8,686.8C1021.2,686.8 1015.1,685.2 1010.1,683.5C1005.1,681.8 1000.1,679.3 996.7,676.8C993.4,674.3 991.4,672.4 990.0,668.5C988.6,664.6 988.4,658.7 988.4,653.4C988.4,648.1 990.0,642.3 990.0,636.8C990.0,631.2 989.4,625.1 988.4,620.1C987.4,615.1 984.9,610.1 984.2,606.7Z" fill="#9ea3c0" stroke="#15161c" stroke-width="1.92"/>
<path d="M1131.7,516.7C1132.4,512.8 1133.4,506.4 1136.7,501.7C1140.0,497.0 1145.9,491.9 1151.7,488.4C1157.5,484.9 1164.8,482.3 1171.7,480.9C1178.7,479.5 1186.5,479.3 1193.4,480.0C1200.4,480.7 1207.6,482.5 1213.4,485.0C1219.2,487.5 1224.7,491.1 1228.5,495.0C1232.3,498.9 1234.6,504.5 1236.0,508.4C1237.4,512.3 1237.8,515.1 1236.8,518.4C1235.8,521.7 1233.4,525.1 1230.1,528.4C1226.8,531.7 1222.3,535.5 1216.8,538.4C1211.2,541.3 1203.5,544.4 1196.8,545.9C1190.1,547.4 1183.4,548.0 1176.7,547.6C1170.0,547.2 1162.8,545.5 1156.7,543.4C1150.6,541.3 1144.0,538.1 1140.0,535.1C1136.0,532.1 1133.9,528.2 1132.5,525.1C1131.1,522.0 1131.0,520.6 1131.7,516.7Z" fill="#9ea3c0" stroke="#15161c" stroke-width="1.92"/>
<path d="M667.5,626.4C667.2,625.0 663.8,621.8 665.5,618.0C667.2,614.2 673.1,608.1 678.0,603.4C682.9,598.7 689.1,594.2 695.0,590.0C700.9,585.8 706.9,582.2 713.4,578.4C719.9,574.6 727.1,570.5 734.0,567.0C740.9,563.5 748.0,560.2 755.0,557.5C762.0,554.8 769.0,552.9 776.0,551.0C783.0,549.1 789.8,547.4 796.8,546.0C803.8,544.6 811.0,543.4 818.0,542.5C825.0,541.6 832.0,540.6 838.5,540.9C845.0,541.1 852.6,542.1 857.3,544.0C862.0,545.9 865.1,550.9 866.7,552.3C868.9,551.8 872.5,548.6 880.0,549.0C887.5,549.4 901.0,551.2 911.5,554.4C922.0,557.6 934.1,562.6 942.8,568.0C951.5,573.4 958.2,580.1 963.7,586.7C969.2,593.3 972.9,600.7 976.0,607.6C979.1,614.5 981.0,622.2 982.4,628.4C983.8,634.6 984.5,640.1 984.5,645.0C984.5,649.9 984.1,653.0 982.4,657.5C980.7,662.0 977.2,668.6 974.1,672.1C971.0,675.6 965.4,677.4 963.7,678.4C964.1,679.8 967.2,682.5 965.8,686.7C964.4,690.9 960.9,696.5 955.3,703.4C949.7,710.3 941.4,721.1 932.4,728.4C923.4,735.7 913.3,741.6 901.1,747.2C888.9,752.8 873.3,758.3 859.4,761.8C845.5,765.3 829.5,767.4 817.7,768.1C805.9,768.8 796.1,767.0 788.5,766.0C780.9,765.0 776.0,763.7 771.8,761.8C767.6,759.9 764.9,755.7 763.5,754.5C761.4,755.0 755.9,757.6 751.0,757.6C746.1,757.6 740.6,756.6 734.3,754.5C728.0,752.4 721.4,749.1 713.4,745.1C705.4,741.1 694.3,736.4 686.3,730.5C678.3,724.6 671.4,717.7 665.5,709.7C659.6,701.7 653.9,690.6 650.9,682.6C647.9,674.6 647.7,668.3 647.7,661.7C647.7,655.1 649.2,647.7 650.9,642.9C652.6,638.1 655.2,635.8 658.0,633.0C660.8,630.2 665.9,627.5 667.5,626.4Z" fill="#9ea3c0"/>
<path d="M883.4,521.7C884.8,517.2 889.2,510.4 893.4,506.7C897.6,502.9 902.8,500.7 908.4,499.2C914.0,497.7 920.9,496.9 926.7,497.5C932.5,498.1 936.5,499.9 943.4,502.5C950.3,505.1 960.0,509.1 968.4,513.4C976.8,517.7 986.5,524.2 993.5,528.4C1000.5,532.6 1005.3,535.3 1010.2,538.4C1015.1,541.5 1019.7,543.6 1022.7,546.7C1025.7,549.8 1027.5,553.1 1028.0,557.0C1028.5,560.9 1028.2,566.2 1026.0,570.0C1023.8,573.8 1019.6,577.8 1015.0,580.0C1010.4,582.2 1002.1,582.5 998.5,583.4C994.9,584.2 997.1,584.5 993.5,585.1C989.9,585.7 982.4,587.3 976.8,586.8C971.2,586.2 965.6,584.0 960.0,581.8C954.4,579.6 948.9,576.5 943.4,573.4C937.9,570.3 932.3,566.7 926.7,563.4C921.1,560.1 915.5,556.7 910.0,553.4C904.5,550.1 897.6,546.7 893.4,543.4C889.2,540.1 886.7,537.0 885.0,533.4C883.3,529.8 882.0,526.2 883.4,521.7Z" fill="#9ea3c0"/>
<path d="M1018.5,525.0C1018.4,520.8 1018.2,517.6 1020.2,513.4C1022.2,509.2 1026.3,503.4 1030.2,500.0C1034.1,496.6 1038.5,494.6 1043.5,493.3C1048.5,492.1 1054.6,491.9 1060.2,492.5C1065.8,493.1 1071.3,494.6 1076.9,496.7C1082.5,498.8 1088.0,501.4 1093.6,505.0C1099.2,508.6 1104.8,513.1 1110.3,518.4C1115.8,523.7 1121.9,530.3 1126.9,536.7C1131.9,543.1 1137.0,550.6 1140.3,556.7C1143.6,562.8 1145.6,568.4 1147.0,573.4C1148.4,578.4 1149.2,582.3 1148.6,586.8C1148.0,591.2 1145.8,596.8 1143.6,600.1C1141.4,603.4 1139.5,605.1 1135.3,606.8C1131.1,608.5 1124.2,609.8 1118.6,610.1C1113.0,610.4 1107.5,609.6 1101.9,608.5C1096.3,607.4 1090.8,605.5 1085.2,603.5C1079.6,601.5 1073.2,599.0 1068.5,596.8C1063.8,594.6 1060.8,592.9 1056.9,590.1C1053.0,587.3 1048.8,584.2 1045.0,580.0C1041.2,575.8 1037.3,570.3 1034.0,565.0C1030.7,559.7 1027.2,552.4 1025.0,548.0C1022.8,543.6 1022.1,542.2 1021.0,538.4C1019.9,534.6 1018.6,529.2 1018.5,525.0Z" fill="#9ea3c0"/>
<path d="M984.2,606.7C983.5,603.4 982.4,603.6 984.2,600.0C986.0,596.4 990.7,588.7 995.0,585.0C999.3,581.3 1004.2,579.3 1010.0,578.0C1015.8,576.7 1024.2,576.5 1030.0,577.0C1035.8,577.5 1040.8,579.0 1045.0,581.0C1049.2,583.0 1052.4,585.5 1055.2,589.2C1058.0,592.9 1059.9,598.2 1061.8,603.4C1063.7,608.5 1065.7,614.5 1066.8,620.1C1067.9,625.7 1068.2,631.8 1068.5,636.8C1068.8,641.8 1069.2,645.4 1068.5,650.1C1067.8,654.8 1066.2,660.9 1064.3,665.1C1062.3,669.3 1060.3,672.0 1056.8,675.1C1053.3,678.2 1048.5,681.5 1043.5,683.5C1038.5,685.5 1032.4,686.8 1026.8,686.8C1021.2,686.8 1015.1,685.2 1010.1,683.5C1005.1,681.8 1000.1,679.3 996.7,676.8C993.4,674.3 991.4,672.4 990.0,668.5C988.6,664.6 988.4,658.7 988.4,653.4C988.4,648.1 990.0,642.3 990.0,636.8C990.0,631.2 989.4,625.1 988.4,620.1C987.4,615.1 984.9,610.1 984.2,606.7Z" fill="#9ea3c0"/>
<path d="M1131.7,516.7C1132.4,512.8 1133.4,506.4 1136.7,501.7C1140.0,497.0 1145.9,491.9 1151.7,488.4C1157.5,484.9 1164.8,482.3 1171.7,480.9C1178.7,479.5 1186.5,479.3 1193.4,480.0C1200.4,480.7 1207.6,482.5 1213.4,485.0C1219.2,487.5 1224.7,491.1 1228.5,495.0C1232.3,498.9 1234.6,504.5 1236.0,508.4C1237.4,512.3 1237.8,515.1 1236.8,518.4C1235.8,521.7 1233.4,525.1 1230.1,528.4C1226.8,531.7 1222.3,535.5 1216.8,538.4C1211.2,541.3 1203.5,544.4 1196.8,545.9C1190.1,547.4 1183.4,548.0 1176.7,547.6C1170.0,547.2 1162.8,545.5 1156.7,543.4C1150.6,541.3 1144.0,538.1 1140.0,535.1C1136.0,532.1 1133.9,528.2 1132.5,525.1C1131.1,522.0 1131.0,520.6 1131.7,516.7Z" fill="#9ea3c0"/>
<path d="M950,574 L965,582.5 L977,586 L990,586.5 L996,584.5 L1013,576 L1030,574 L1048,581 L1058,592 L1040,598 L1005,598 L992,612 L986,632 L978,612 L964,592Z" fill="#9ea3c0"/>
<path d="M903,548.5 Q922,560 936,567 Q960,581.5 977,586.3 Q988,588 996.5,584.3" fill="none" stroke="#3c3e4b" stroke-width="2.6"/>
<path d="M940,572 Q955,580 964.8,584.5 Q978,590 982,598 Q985.5,612 983.4,630" fill="none" stroke="#15161c" stroke-width="1.1"/>
<path d="M996.5,584.3 Q988,590 984.5,600.6 Q985,613 989.6,630" fill="none" stroke="#15161c" stroke-width="1.1"/>
<path d="M686.3,611.8C687.0,608.5 690.5,604.0 695.0,600.0C699.5,596.0 706.5,592.3 713.0,588.0C719.5,583.7 727.3,577.9 734.3,574.2C741.3,570.5 748.0,568.4 755.0,566.0C762.0,563.6 769.0,561.3 776.0,559.6C783.0,557.9 790.0,557.0 797.0,556.0C804.0,555.0 810.4,553.8 817.7,553.4C825.0,553.0 835.2,552.0 840.6,553.4C846.0,554.8 850.4,555.8 850.0,561.7C849.6,567.6 843.2,578.4 838.5,588.8C833.8,599.2 826.4,616.3 821.9,624.3C817.4,632.3 815.9,634.2 811.4,636.8C806.9,639.4 804.2,640.6 794.8,639.9C785.4,639.2 768.6,635.2 755.0,632.6C741.4,630.0 724.1,626.4 713.4,624.3C702.6,622.2 695.0,622.1 690.5,620.0C686.0,617.9 685.5,615.1 686.3,611.8Z" fill="url(#gHole)" stroke="#15161c" stroke-width="1.20"/>
<path d="M707.2,624.3C710.0,622.2 715.8,616.3 723.8,611.8C731.8,607.2 746.3,600.6 755.0,597.0C763.7,593.4 769.0,592.1 776.0,590.0C783.0,587.9 789.8,586.1 796.8,584.6C803.8,583.1 810.7,581.9 818.0,581.0C825.3,580.1 836.7,579.7 840.4,579.4C838.7,583.2 831.7,598.2 830.0,602.0C828.2,606.0 822.2,620.7 819.5,626.0C816.8,631.3 816.2,631.9 814.0,634.0C811.8,636.1 809.2,637.5 806.0,638.5C802.8,639.5 803.3,640.9 794.8,639.9C786.3,638.9 761.6,633.8 755.0,632.6C747.0,631.2 715.2,625.7 707.2,624.3Z" fill="#ffffff" stroke="#15161c" stroke-width="0.96"/>
<path d="M680.0,636.7C669.6,635.8 674.0,636.4 671.7,638.8C669.5,641.2 667.4,647.5 666.5,651.3C665.6,655.1 666.0,656.8 666.5,661.7C667.0,666.6 667.7,674.9 669.6,680.5C671.5,686.1 674.2,689.9 678.0,695.1C681.8,700.3 686.7,706.2 692.6,711.8C698.5,717.3 706.5,723.9 713.4,728.4C720.3,732.9 727.4,736.5 734.3,738.9C741.2,741.3 750.1,743.7 755.0,743.0C759.9,742.3 760.0,740.6 763.5,734.7C767.0,728.8 771.5,717.0 776.0,707.6C780.5,698.2 787.3,685.4 790.6,678.4C793.9,671.4 796.1,669.4 795.8,665.9C795.4,662.4 791.8,659.9 788.5,657.5C785.2,655.1 785.1,653.5 776.0,651.3C766.9,649.1 750.0,646.9 734.0,644.5C718.0,642.1 690.4,637.7 680.0,636.7Z" fill="url(#gHole)" stroke="#15161c" stroke-width="1.20"/>
<path d="M670.2,674.0C670.7,672.9 671.4,669.1 673.0,667.5C674.6,665.9 676.7,664.9 680.0,664.3C683.3,663.7 690.5,663.9 692.6,663.8C698.2,664.2 710.1,664.2 726.4,666.2C742.7,668.2 779.9,674.2 790.6,675.8C788.2,681.1 778.4,702.3 776.0,707.6C773.5,712.5 764.3,731.2 761.0,737.0C757.7,742.8 758.0,741.5 756.0,742.5C754.0,743.5 752.5,743.9 748.9,743.3C745.3,742.7 740.7,741.8 734.3,738.9C727.9,736.0 717.2,730.1 710.3,725.6C703.3,721.1 698.0,717.1 692.6,711.8C687.2,706.4 681.9,699.8 678.2,693.5C674.5,687.2 671.5,677.2 670.2,674.0Z" fill="#ffffff" stroke="#15161c" stroke-width="0.96"/>
<path d="M836.5,664.8C831.6,666.0 822.2,668.5 817.7,672.1C813.2,675.8 812.9,679.8 809.4,686.7C805.9,693.7 801.3,705.1 796.8,713.8C792.3,722.5 784.8,733.7 782.2,738.9C779.6,744.1 780.2,743.2 781.2,745.1C782.2,747.0 782.4,749.6 788.5,750.3C794.6,751.0 805.9,750.8 817.7,749.3C829.5,747.8 845.5,745.2 859.4,741.0C873.3,736.8 888.9,730.6 901.1,724.3C913.3,718.0 924.8,709.3 932.4,703.4C940.0,697.5 944.7,692.3 947.0,688.8C949.3,685.3 950.2,684.7 946.0,682.6C941.8,680.5 933.0,678.4 922.0,676.3C911.0,674.2 892.8,671.9 880.3,670.0C867.8,668.1 854.2,665.7 846.9,664.8C839.6,663.9 841.4,663.6 836.5,664.8Z" fill="url(#gHole)" stroke="#15161c" stroke-width="1.20"/>
<path d="M813.8,685.0C814.5,684.4 816.0,682.3 818.0,681.5C820.0,680.7 821.2,680.0 826.0,680.0C830.8,680.0 843.4,681.2 846.9,681.5C852.5,682.7 865.6,685.2 880.3,688.8C895.0,692.4 926.1,700.6 935.2,703.0C929.5,706.5 913.7,718.0 901.1,724.3C888.5,730.6 873.3,736.8 859.4,741.0C845.5,745.2 828.9,747.8 817.7,749.3C806.5,750.8 796.5,749.6 792.2,749.7C795.8,738.9 810.2,695.8 813.8,685.0Z" fill="#ffffff" stroke="#15161c" stroke-width="0.96"/>
<path d="M869.8,568.0C872.2,565.4 875.1,561.2 880.3,560.7C885.5,560.2 894.1,562.2 901.1,564.8C908.1,567.4 915.0,571.6 922.0,576.3C929.0,581.0 936.9,587.1 942.8,593.0C948.7,598.9 953.6,605.2 957.4,611.8C961.2,618.4 964.2,626.4 965.8,632.6C967.4,638.9 967.5,644.4 966.8,649.3C966.1,654.2 964.2,659.0 961.6,661.8C959.0,664.6 957.8,666.0 951.2,666.0C944.6,666.0 933.8,664.2 922.0,661.8C910.2,659.4 892.5,654.2 880.3,651.4C868.1,648.6 856.0,646.5 849.0,645.1C842.0,643.7 840.8,644.4 838.5,643.0C836.2,641.6 833.6,642.3 835.4,636.8C837.1,631.2 844.0,619.8 849.0,609.7C854.0,599.6 862.2,583.2 865.7,576.3C869.2,569.3 867.4,570.6 869.8,568.0Z" fill="url(#gHole)" stroke="#15161c" stroke-width="1.20"/>
<path d="M869.0,589.0C869.8,588.3 871.8,585.8 874.0,584.7C876.2,583.6 879.2,582.9 882.0,582.5C884.8,582.1 889.2,582.6 890.7,582.6C894.2,583.6 904.5,585.3 911.5,588.8C918.5,592.3 925.8,597.8 932.4,603.4C939.0,609.0 946.0,615.6 951.2,622.2C956.4,628.8 961.2,638.0 963.7,643.0C966.2,648.0 965.9,650.5 966.3,652.0C966.1,653.0 965.8,656.4 965.0,658.0C964.2,659.6 963.9,660.5 961.6,661.8C959.3,663.1 955.5,665.6 951.2,666.0C946.9,666.4 938.5,664.3 936.0,664.0C926.7,661.9 896.2,654.9 880.3,651.4C864.4,647.9 847.2,644.4 840.6,643.0C845.3,634.0 864.3,598.0 869.0,589.0Z" fill="#ffffff" stroke="#15161c" stroke-width="0.96"/>
<path d="M900.0,525.0C899.7,521.9 901.9,517.5 905.0,515.0C908.1,512.5 914.2,510.7 918.4,510.0C922.6,509.3 924.4,509.4 930.0,510.9C935.6,512.4 944.0,515.5 951.8,519.2C959.6,523.0 969.8,529.4 976.8,533.4C983.8,537.4 988.8,540.3 993.5,543.4C998.2,546.5 1002.6,548.9 1005.1,551.7C1007.6,554.5 1009.0,557.2 1008.5,560.0C1008.0,562.8 1004.3,566.4 1001.8,568.4C999.3,570.4 997.1,571.2 993.5,571.8C989.9,572.4 984.3,572.6 980.1,571.8C975.9,571.0 973.1,569.3 968.4,566.8C963.7,564.3 957.3,560.1 951.8,556.7C946.2,553.4 940.7,549.8 935.1,546.7C929.5,543.7 923.1,540.6 918.4,538.4C913.7,536.2 909.8,535.6 906.7,533.4C903.6,531.2 900.3,528.1 900.0,525.0Z" fill="url(#gHole)" stroke="#15161c" stroke-width="1.20"/>
<path d="M935.1,544.2C936.2,543.4 942.6,543.5 946.8,544.2C951.0,544.9 955.1,546.6 960.1,548.4C965.1,550.2 971.2,552.7 976.8,555.1C982.4,557.5 989.2,560.5 993.5,562.6C997.8,564.7 1002.6,566.1 1002.6,567.6C1002.6,569.1 997.2,571.1 993.5,571.8C989.8,572.5 984.3,572.6 980.1,571.8C975.9,571.0 973.1,569.3 968.4,566.8C963.7,564.3 956.5,559.6 951.8,556.7C947.1,553.8 942.8,551.3 940.0,549.2C937.2,547.1 934.0,545.0 935.1,544.2Z" fill="#ffffff" stroke="#15161c" stroke-width="0.96"/>
<path d="M1036.8,521.7C1037.2,518.7 1038.2,514.5 1040.2,511.7C1042.2,508.9 1045.2,506.2 1048.5,505.0C1051.8,503.8 1055.5,503.5 1060.2,504.2C1064.9,504.9 1071.3,506.6 1076.9,509.2C1082.5,511.8 1088.0,515.4 1093.6,520.0C1099.2,524.6 1105.6,531.1 1110.3,536.7C1115.0,542.3 1118.9,547.8 1121.9,553.4C1125.0,559.0 1127.5,565.1 1128.6,570.1C1129.7,575.1 1129.4,579.5 1128.6,583.4C1127.8,587.3 1126.1,591.0 1123.6,593.4C1121.1,595.8 1117.8,597.3 1113.6,597.6C1109.4,597.9 1103.9,596.9 1098.6,595.1C1093.3,593.3 1087.5,590.4 1081.9,586.8C1076.3,583.2 1070.2,578.1 1065.2,573.4C1060.2,568.7 1055.8,563.7 1051.9,558.4C1048.0,553.1 1044.3,546.4 1041.9,541.7C1039.5,537.0 1038.6,533.3 1037.7,530.0C1036.8,526.7 1036.4,524.8 1036.8,521.7Z" fill="url(#gHole)" stroke="#15161c" stroke-width="1.20"/>
<path d="M1041.0,540.0C1039.9,535.8 1042.5,534.9 1045.2,533.4C1047.9,531.9 1052.2,530.6 1056.9,530.9C1061.6,531.2 1067.4,532.5 1073.5,535.1C1079.6,537.7 1087.5,542.3 1093.6,546.7C1099.7,551.1 1105.3,556.7 1110.3,561.7C1115.3,566.7 1120.7,573.2 1123.6,576.8C1126.5,580.4 1127.8,580.6 1127.8,583.4C1127.8,586.2 1126.0,591.0 1123.6,593.4C1121.2,595.8 1117.8,597.3 1113.6,597.6C1109.4,597.9 1103.9,596.9 1098.6,595.1C1093.3,593.3 1087.5,590.4 1081.9,586.8C1076.3,583.2 1070.2,578.1 1065.2,573.4C1060.2,568.7 1055.9,564.0 1051.9,558.4C1047.9,552.8 1042.1,544.2 1041.0,540.0Z" fill="#ffffff" stroke="#15161c" stroke-width="0.96"/>
<path d="M1001.7,601.7C1002.5,599.5 1004.0,595.6 1006.8,593.4C1009.6,591.2 1014.5,589.4 1018.4,588.7C1022.3,588.0 1026.8,588.3 1030.1,589.2C1033.4,590.1 1036.3,591.3 1038.5,594.2C1040.7,597.1 1042.0,601.8 1043.5,606.7C1045.0,611.6 1046.6,617.8 1047.6,623.4C1048.6,629.0 1049.3,634.8 1049.3,640.1C1049.3,645.4 1048.8,650.4 1047.6,655.1C1046.3,659.8 1044.4,665.3 1041.8,668.5C1039.2,671.7 1035.4,673.3 1031.8,674.3C1028.2,675.3 1023.7,675.1 1020.1,674.3C1016.5,673.5 1012.3,671.4 1010.1,669.3C1007.9,667.2 1007.1,665.3 1006.8,661.8C1006.5,658.3 1008.1,653.1 1008.4,648.4C1008.7,643.7 1008.8,638.4 1008.4,633.4C1008.0,628.4 1006.9,622.8 1005.9,618.4C1004.9,614.0 1002.8,609.5 1002.1,606.7C1001.4,603.9 1000.9,603.9 1001.7,601.7Z" fill="url(#gHole)" stroke="#15161c" stroke-width="1.20"/>
<path d="M1005.9,613.4C1006.7,611.5 1008.9,609.6 1011.8,608.4C1014.7,607.1 1019.5,606.0 1023.4,605.9C1027.3,605.8 1032.0,606.1 1035.1,607.6C1038.2,609.1 1039.8,611.9 1041.8,615.1C1043.8,618.3 1045.5,622.5 1046.8,626.7C1048.0,630.9 1049.2,635.4 1049.3,640.1C1049.4,644.8 1048.8,650.4 1047.6,655.1C1046.3,659.8 1044.4,665.3 1041.8,668.5C1039.2,671.7 1035.4,673.3 1031.8,674.3C1028.2,675.3 1023.4,675.0 1020.1,674.3C1016.8,673.6 1013.3,672.5 1011.8,670.1C1010.3,667.7 1011.0,663.7 1010.9,660.1C1010.8,656.5 1011.2,652.9 1010.9,648.4C1010.6,643.9 1010.0,638.1 1009.3,633.4C1008.6,628.7 1007.4,623.3 1006.8,620.0C1006.2,616.7 1005.1,615.3 1005.9,613.4Z" fill="#ffffff" stroke="#15161c" stroke-width="0.96"/>
<path d="M1150.0,514.2C1150.4,510.5 1151.9,505.0 1155.0,501.7C1158.1,498.4 1163.4,495.9 1168.4,494.2C1173.4,492.5 1179.5,491.4 1185.1,491.4C1190.7,491.4 1197.1,492.5 1201.8,494.2C1206.5,495.9 1210.9,498.5 1213.4,501.7C1215.9,504.9 1217.6,509.5 1216.8,513.4C1216.0,517.3 1212.0,521.9 1208.4,525.1C1204.8,528.3 1199.8,530.8 1195.1,532.6C1190.4,534.4 1185.4,535.9 1180.1,535.9C1174.8,535.9 1168.0,534.5 1163.4,532.6C1158.8,530.7 1154.7,527.3 1152.5,524.2C1150.3,521.1 1149.6,518.0 1150.0,514.2Z" fill="url(#gHole)" stroke="#15161c" stroke-width="1.20"/>
<path d="M1160.0,528.4C1161.1,526.9 1165.9,524.5 1170.1,523.4C1174.3,522.3 1180.1,521.7 1185.1,521.7C1190.1,521.7 1196.5,522.6 1200.1,523.4C1203.7,524.2 1207.6,525.2 1206.8,526.7C1206.0,528.2 1199.5,531.1 1195.1,532.6C1190.6,534.1 1185.4,535.9 1180.1,535.9C1174.8,535.9 1166.8,533.9 1163.4,532.6C1160.1,531.4 1158.9,529.9 1160.0,528.4Z" fill="#ffffff" stroke="#15161c" stroke-width="0.96"/>
<path d="M1026.8,555.1 Q1024,570 1013.5,577.6 Q1032,576 1048.5,582.6 Q1033,571 1026.8,555.1Z" fill="#9a9fbb" stroke="#15161c" stroke-width="1.1"/>
<path d="M1026.8,555.1 Q1024,570 1013.5,577.6 L1019,576.6 Q1027,569 1028.5,561Z" fill="#5a5d70" stroke="#15161c" stroke-width="0.8"/>
<path d="M1026.8,555.1 Q1033,571 1048.5,582.6 L1043,580.6 Q1033,572 1028.5,561Z" fill="#5a5d70" stroke="#15161c" stroke-width="0.8"/>
<path d="M806.2,650.3 L818.7,645.1 L825,653.5 L812.5,658.7Z" fill="#6b6e86" stroke="#15161c" stroke-width="1.08"/>
<path d="M809.5,652.5 L820.5,648 L825,653.5 L812.5,658.7Z" fill="#9a9fbb" stroke="#15161c" stroke-width="0.72"/>
<path d="M687.5,490 L725,476.2 L730,502.5 L695,515Z" fill="#9da2bf" stroke="#15161c" stroke-width="1.08"/>
<path d="M687.5,490 L725,476.2 L727,488 L691,500.5Z" fill="#6a6d84" stroke="#15161c" stroke-width="0.96"/>
<path d="M725,476.2 L730,502.5 L722.5,497.5 L721,487Z" fill="#585b6e" stroke="#15161c" stroke-width="0.84"/>
<path d="M691,500.5 L721.5,489.5" stroke="#15161c" stroke-width="0.84"/>
<defs><linearGradient id="gCyl" gradientUnits="userSpaceOnUse" x1="1376" y1="0" x2="1452" y2="0"><stop offset="0" stop-color="#5f6277"/><stop offset="0.25" stop-color="#777b94"/><stop offset="0.55" stop-color="#7a7e98"/><stop offset="0.8" stop-color="#6f728a"/><stop offset="1" stop-color="#686b82"/></linearGradient></defs>
<path d="M1451.9,361.9 L1479.7,351.6 L1492.9,414.6 L1460.7,432.2Z" fill="#858aa4" stroke="#15161c" stroke-width="1.08"/>
<path d="M1479.7,351.6 L1484.1,356 L1496.5,413 L1492.9,414.6Z" fill="#6a6d84" stroke="#15161c" stroke-width="0.84"/>
<path d="M1370.4,268 L1387.4,461.5 Q1395,470 1405,470.3 Q1418,469 1428,462 L1460.7,432.2 L1435.8,262.2Z" fill="url(#gCyl)" stroke="#15161c" stroke-width="1.08"/>
<ellipse cx="1402.8" cy="262.2" rx="33.2" ry="21.8" fill="#9296b2" stroke="#15161c" stroke-width="0.9" transform="rotate(-3 1402.8 262.2)"/>
<ellipse cx="1402.8" cy="262.4" rx="10" ry="7.2" fill="#777b93" stroke="#15161c" stroke-width="0.9"/>
<path d="M1346.4,402.9 L1378.6,390.6 L1385.9,464.4 L1356.6,479.1Z" fill="#7d819b" stroke="#15161c" stroke-width="1.08"/>
<path d="M1346.4,402.9 L1349.6,401.8 L1359.6,477.5 L1356.6,479.1Z" fill="#54576a" stroke="#15161c" stroke-width="0.72"/>
<path d="M1428.4,402.9 L1435.8,400 L1450.4,420.5 L1453.3,439.5 L1432.8,452.7Z" fill="#55586b" stroke="#15161c" stroke-width="1.08"/>
<path d="M1443,423.5 L1450.4,420.5 L1453.3,439.5 L1446,443.5Z" fill="#8c90ab" stroke="#15161c" stroke-width="0.84"/>
<path d="M1428.4,402.9 L1435.8,400 L1450.4,420.5 L1443,423.5Z" fill="#9da2bf" stroke="#15161c" stroke-width="0.84"/>
<path d="M839.6,553.4L840.6,580.5M685.3,638.8L686.3,661.7M779.1,653.4L780.2,670M845.9,665.9L845.9,681.5M939.7,682.6L940.7,702.4M814.6,676.3L814.6,688.8M888.6,561.7L889.6,582.6M869.8,568L870.9,586.7M929.2,511.7L931.7,543.4M1006.8,553.4L1007.7,563.4M1040.1,595L1041.8,615M734.3,754.5L734.3,769.6M763.5,755.1L765,770.8M788.5,766L789.5,781.6M965.8,686.7L966.8,702.4M650.9,682.6L650.9,698.2M1126.1,609.2L1126.9,625.1M1028,686.8L1028.5,702.5M1236.5,514L1237,530" stroke="#15161c" stroke-width="0.9" fill="none"/>
<path d="M756.3,651.0L764.7,651.0M757.5,648.0L763.5,654.0M760.5,646.8L760.5,655.2M763.5,648.0L757.5,654.0" stroke="#459ff2" stroke-width="1.1" fill="none"/>
<path d="M1361.1,476.7L1369.5,476.7M1362.3,473.7L1368.3,479.7M1365.3,472.5L1365.3,480.9M1368.3,473.7L1362.3,479.7" stroke="#459ff2" stroke-width="1.1" fill="none"/>
<path d="M384.2,365.1 L196.1,446.1 L194.1,433.9 L164.0,467.6 L209.2,468.8 L201.7,459.0 L389.8,377.9Z" transform="translate(2.5,3)" fill="#2a2a33" opacity="0.6" filter="url(#sh)"/><path d="M384.2,365.1 L196.1,446.1 L194.1,433.9 L164.0,467.6 L209.2,468.8 L201.7,459.0 L389.8,377.9Z" fill="#f4845f"/>
<path d="M864.8,293.6 L764.9,599.7 L754.2,593.0 L759.3,637.8 L789.8,604.6 L777.3,603.7 L877.2,297.6Z" transform="translate(2.5,3)" fill="#2a2a33" opacity="0.6" filter="url(#sh)"/><path d="M864.8,293.6 L764.9,599.7 L754.2,593.0 L759.3,637.8 L789.8,604.6 L777.3,603.7 L877.2,297.6Z" fill="#f4845f"/>
<path d="M1089.8,253.2 L1321.3,451.1 L1310.9,458.7 L1354.4,470.9 L1335.6,429.8 L1329.7,441.3 L1098.2,243.4Z" transform="translate(2.5,3)" fill="#2a2a33" opacity="0.6" filter="url(#sh)"/><path d="M1089.8,253.2 L1321.3,451.1 L1310.9,458.7 L1354.4,470.9 L1335.6,429.8 L1329.7,441.3 L1098.2,243.4Z" fill="#f4845f"/>
<g stroke-linecap="round">
<path d="M446,799 L431.5,780" stroke="#c41414" stroke-width="3"/><path d="M429.5,777 L437,780.5 L432,784.5Z" fill="#c41414" stroke="#c41414" stroke-width="1"/>
<path d="M446,799 L416,809.5" stroke="#1414e0" stroke-width="3"/><path d="M411.5,811 L418.5,805.5 L420.5,811.5Z" fill="#1414e0" stroke="#1414e0" stroke-width="1"/>
<path d="M446.5,799 L447.5,818" stroke="#8fe08f" stroke-width="3"/><path d="M447.8,825 L443.8,817.5 L451.5,817.5Z" fill="#1c8a1c" stroke="#1c8a1c" stroke-width="1"/>
</g>
<text x="424" y="774.5" font-family="Liberation Sans, sans-serif" font-size="9.5" fill="#e0523c">X</text>
<text x="403.5" y="814" font-family="Liberation Sans, sans-serif" font-size="9.5" fill="#1414e0">Z</text>
<text x="448.5" y="832.5" font-family="Liberation Sans, sans-serif" font-size="9.5" fill="#3cb43c">Y</text>
</svg>
</div></body></html>
